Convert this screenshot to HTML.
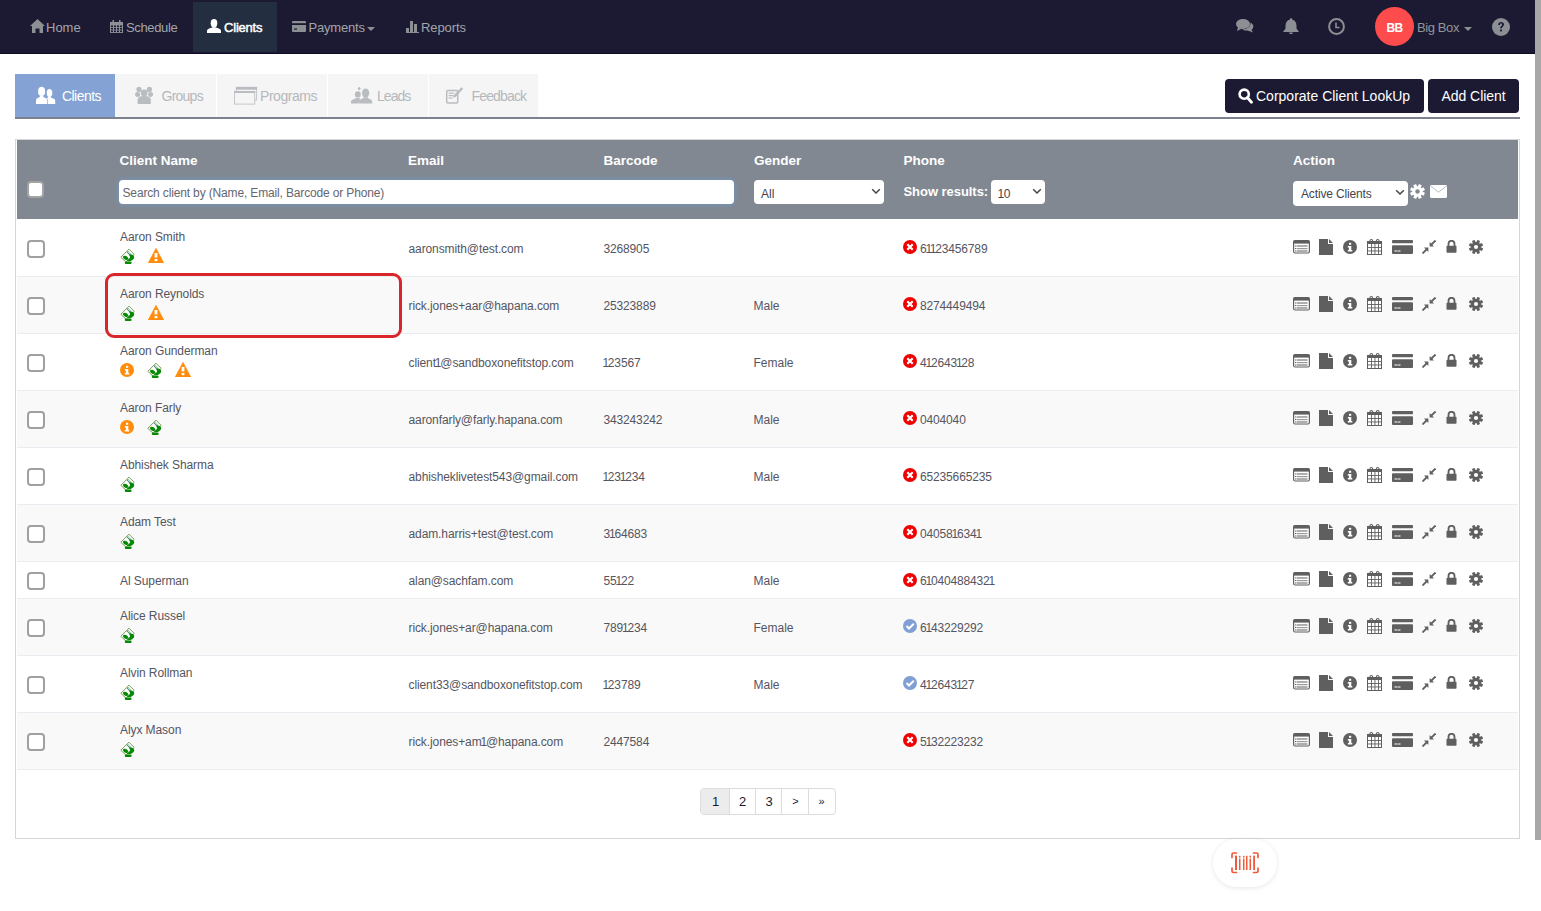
<!DOCTYPE html><html><head><meta charset="utf-8"><style>
html,body{margin:0;padding:0;}
body{width:1541px;height:911px;overflow:hidden;position:relative;background:#fff;font-family:"Liberation Sans",sans-serif;}
.t{position:absolute;white-space:nowrap;line-height:1;}
svg{display:block}
</style></head><body>
<div style="position:absolute;left:0px;top:0px;width:1541px;height:53px;background:#1b1a32"></div>
<div style="position:absolute;left:0px;top:53px;width:1541px;height:1px;background:#0d0c24"></div>
<div style="position:absolute;left:193px;top:2px;width:84px;height:50px;background:#232f40"></div>
<svg style="position:absolute;left:30px;top:19px" width="15" height="14" viewBox="0 0 15 14"><path d="M7.5 0 L15 7 L13 7 L13 14 L9.5 14 L9.5 9.5 L5.5 9.5 L5.5 14 L2 14 L2 7 L0 7 Z" fill="#8c8f94"/></svg>
<div class="t" style="left:46px;top:21.00px;font-size:13px;font-weight:400;color:#a3a5ab;">Home</div>
<svg style="position:absolute;left:110px;top:20px" width="13" height="13" viewBox="0 0 13 13"><rect x="0" y="2" width="13" height="11" fill="#8c8f94"/><rect x="1" y="5.5" width="2" height="1.6" fill="#1b1a32"/><rect x="1" y="8.0" width="2" height="1.6" fill="#1b1a32"/><rect x="1" y="10.5" width="2" height="1.6" fill="#1b1a32"/><rect x="4" y="5.5" width="2" height="1.6" fill="#1b1a32"/><rect x="4" y="8.0" width="2" height="1.6" fill="#1b1a32"/><rect x="4" y="10.5" width="2" height="1.6" fill="#1b1a32"/><rect x="7" y="5.5" width="2" height="1.6" fill="#1b1a32"/><rect x="7" y="8.0" width="2" height="1.6" fill="#1b1a32"/><rect x="7" y="10.5" width="2" height="1.6" fill="#1b1a32"/><rect x="10" y="5.5" width="2" height="1.6" fill="#1b1a32"/><rect x="10" y="8.0" width="2" height="1.6" fill="#1b1a32"/><rect x="10" y="10.5" width="2" height="1.6" fill="#1b1a32"/><rect x="2.5" y="0" width="1.5" height="3" fill="#8c8f94"/><rect x="9" y="0" width="1.5" height="3" fill="#8c8f94"/></svg>
<div class="t" style="left:126px;top:21.00px;font-size:13px;font-weight:400;color:#a3a5ab;letter-spacing:-0.35px">Schedule</div>
<svg style="position:absolute;left:207px;top:19px" width="14" height="14" viewBox="0 0 14 14"><ellipse cx="7" cy="4.2" rx="3.3" ry="4.2" fill="#fff"/><path d="M0 14 L0 11.8 C0 10.2 2 9.6 4.4 8.8 L5.4 8.2 L8.6 8.2 L9.6 8.8 C12 9.6 14 10.2 14 11.8 L14 14 Z" fill="#fff"/></svg>
<div class="t" style="left:224px;top:21.00px;font-size:13px;font-weight:400;color:#fff;letter-spacing:-0.2px;-webkit-text-stroke:0.45px #fff">Clients</div>
<svg style="position:absolute;left:292px;top:21px" width="14" height="11" viewBox="0 0 14 11"><rect x="0" y="0" width="14" height="11" rx="1" fill="#8c8f94"/><rect x="0" y="2.2" width="14" height="1.8" fill="#1b1a32"/><rect x="2" y="7.5" width="3" height="1.2" fill="#1b1a32"/></svg>
<div class="t" style="left:308.5px;top:21.00px;font-size:13px;font-weight:400;color:#a3a5ab;letter-spacing:-0.2px">Payments</div>
<svg style="position:absolute;left:367px;top:27px" width="8" height="4" viewBox="0 0 8 4"><path d="M0 0 L8 0 L4 4 Z" fill="#8c8f94"/></svg>
<svg style="position:absolute;left:406px;top:21px" width="13" height="12" viewBox="0 0 13 12"><rect x="0" y="7" width="3" height="5" fill="#8c8f94"/><rect x="4" y="0" width="3" height="12" fill="#8c8f94"/><rect x="8" y="3" width="3" height="9" fill="#8c8f94"/><rect x="0" y="11" width="13" height="1" fill="#8c8f94"/></svg>
<div class="t" style="left:421px;top:21.00px;font-size:13px;font-weight:400;color:#a3a5ab;letter-spacing:-0.1px">Reports</div>
<svg style="position:absolute;left:1236px;top:19px" width="18" height="14" viewBox="0 0 18 14"><ellipse cx="7" cy="5" rx="7" ry="5" fill="#8c8f94"/><path d="M2 8 L1 12 L6 9.5 Z" fill="#8c8f94"/><path d="M14.5 3.5 C17 5 18 7 17 9 C16.5 10 16 10.5 15.5 11 L17 13.5 L11.5 11.5 C10 11.8 7.5 11.5 6 10.5 C11 10.5 15 7.5 14.5 3.5 Z" fill="#8c8f94"/></svg>
<svg style="position:absolute;left:1283px;top:18px" width="16" height="16" viewBox="0 0 16 16"><path d="M8 0 C9 0 9 1 9 1.5 C12 2 13.5 4.5 13.5 8 L13.5 10.5 L16 14 L0 14 L2.5 10.5 L2.5 8 C2.5 4.5 4 2 7 1.5 C7 1 7 0 8 0 Z" fill="#8c8f94"/><path d="M6 14.5 L10 14.5 C10 15.5 9 16 8 16 C7 16 6 15.5 6 14.5 Z" fill="#8c8f94"/></svg>
<svg style="position:absolute;left:1328px;top:18px" width="17" height="17" viewBox="0 0 17 17"><circle cx="8.5" cy="8.5" r="7.4" fill="none" stroke="#8c8f94" stroke-width="2"/><path d="M8 4.5 L8 9.5 L11.5 9.5" fill="none" stroke="#8c8f94" stroke-width="1.6"/></svg>
<div style="position:absolute;left:1374.5px;top:6.5px;width:39.5px;height:39.5px;background:#fe4b4b;border-radius:50%"></div>
<div class="t" style="left:1386.5px;top:21.84px;font-size:12px;font-weight:700;color:#fff;letter-spacing:-0.6px">BB</div>
<div class="t" style="left:1417px;top:21.00px;font-size:13px;font-weight:400;color:#939599;letter-spacing:-0.4px">Big Box</div>
<svg style="position:absolute;left:1464px;top:27px" width="8" height="4" viewBox="0 0 8 4"><path d="M0 0 L8 0 L4 4 Z" fill="#8c8f94"/></svg>
<svg style="position:absolute;left:1492px;top:18px" width="18" height="18" viewBox="0 0 18 18"><circle cx="9" cy="9" r="9" fill="#8c8f94"/><path d="M6.2 7 C6.2 4.8 7.6 4 9.1 4 C10.8 4 12 5 12 6.6 C12 8.4 9.9 8.6 9.9 10.3 L8.2 10.3 C8.2 7.8 10.1 7.8 10.1 6.7 C10.1 6 9.7 5.6 9 5.6 C8.3 5.6 8 6.1 8 7 Z" fill="#1b1a32"/><rect x="8.1" y="11.5" width="1.9" height="1.9" fill="#1b1a32"/></svg>
<div style="position:absolute;left:15px;top:74px;width:100px;height:43px;background:#84a2d4"></div>
<div style="position:absolute;left:115px;top:74px;width:101px;height:43px;background:#f5f5f5"></div>
<div style="position:absolute;left:217px;top:74px;width:110px;height:43px;background:#f5f5f5"></div>
<div style="position:absolute;left:328px;top:74px;width:100px;height:43px;background:#f5f5f5"></div>
<div style="position:absolute;left:429px;top:74px;width:109px;height:43px;background:#f5f5f5"></div>
<div style="position:absolute;left:15px;top:117px;width:1505px;height:2px;background:#7b828d"></div>
<svg style="position:absolute;left:36px;top:86px" width="20" height="18" viewBox="0 0 20 18"><ellipse cx="5.6" cy="5.4" rx="3.5" ry="4.6" fill="#fff"/><path d="M0 18 L0 14.2 C0 12.6 1.4 12 3.4 11.2 L4.2 10 L7 10 L7.8 11.2 C9.8 12 11.2 12.6 11.2 14.2 L11.2 18 Z" fill="#fff"/><ellipse cx="13.5" cy="7" rx="2.8" ry="4" fill="#fff"/><path d="M11.8 18 L11.8 13.6 L10.6 12.6 L11.8 11.6 L12.4 10.8 L14.6 10.8 L15.2 11.8 C17 12.4 19.2 12.8 19.2 14.4 L19.2 18 Z" fill="#fff"/></svg>
<div class="t" style="left:62px;top:89.15px;font-size:14px;font-weight:400;color:#fff;letter-spacing:-0.55px">Clients</div>
<svg style="position:absolute;left:135px;top:86px" width="18" height="18" viewBox="0 0 18 18"><circle cx="4" cy="3.4" r="2.6" fill="#b9bcc0"/><circle cx="14.4" cy="3.4" r="2.6" fill="#b9bcc0"/><circle cx="2.6" cy="8.4" r="2.5" fill="#b9bcc0"/><circle cx="15.6" cy="8.4" r="2.5" fill="#b9bcc0"/><circle cx="9.2" cy="6.9" r="3.4" fill="#b9bcc0"/><path d="M2.6 18 L2.6 14 C2.6 11.4 5 10 9.2 10 C13.4 10 15.8 11.4 15.8 14 L15.8 18 Z" fill="#b9bcc0"/></svg>
<div class="t" style="left:161.5px;top:89.15px;font-size:14px;font-weight:400;color:#b5b8bc;letter-spacing:-0.75px">Groups</div>
<svg style="position:absolute;left:233px;top:86px" width="25" height="19" viewBox="0 0 25 19"><rect x="3.4" y="1.4" width="20.2" height="12.6" fill="none" stroke="#c3c6ca" stroke-width="1"/><rect x="2.9" y="0.9" width="21.2" height="2.8" fill="#b9bcc0"/><rect x="1.5" y="5.5" width="20.2" height="12.6" fill="#f5f5f5" stroke="#c3c6ca" stroke-width="1"/><rect x="1" y="5" width="21.2" height="2" fill="#b9bcc0"/></svg>
<div class="t" style="left:260px;top:89.15px;font-size:14px;font-weight:400;color:#b5b8bc;letter-spacing:-0.45px">Programs</div>
<svg style="position:absolute;left:351px;top:86px" width="22" height="18" viewBox="0 0 22 18"><path d="M8.2 0.8 L9.9 2.6 L8.2 4.4 L6.5 2.6 Z" fill="#b9bcc0"/><ellipse cx="6.8" cy="8.4" rx="2.9" ry="3.2" fill="#b9bcc0"/><path d="M0 17.5 L0 15.8 C0 14.4 1.6 13.6 3.6 13 L5 12 L8.4 12 L9 13 L7.4 17.5 Z" fill="#b9bcc0"/><ellipse cx="14.6" cy="7" rx="3.6" ry="4.6" fill="#b9bcc0"/><path d="M7.8 17.5 L7.8 15.6 C7.8 14 9.6 13.2 11.8 12.4 L12.6 11.2 L16.6 11.2 L17.4 12.4 C19.6 13.2 21.2 14 21.2 15.6 L21.2 17.5 Z" fill="#b9bcc0"/></svg>
<div class="t" style="left:377px;top:89.15px;font-size:14px;font-weight:400;color:#b5b8bc;letter-spacing:-0.95px">Leads</div>
<svg style="position:absolute;left:445px;top:86px" width="19" height="18" viewBox="0 0 19 18"><rect x="1.7" y="4.5" width="11" height="12.6" rx="1" fill="none" stroke="#b9bcc0" stroke-width="1.5"/><rect x="3.6" y="6.6" width="5.6" height="1.2" fill="#b9bcc0"/><rect x="3.6" y="9" width="4.6" height="1.2" fill="#b9bcc0"/><rect x="3.6" y="11.4" width="3.6" height="1.2" fill="#b9bcc0"/><path d="M16.4 1.2 L18.2 2.8 L10.6 11 L7.8 11.8 L8.8 9.2 Z" fill="#b9bcc0"/></svg>
<div class="t" style="left:471.5px;top:89.15px;font-size:14px;font-weight:400;color:#b5b8bc;letter-spacing:-0.85px">Feedback</div>
<div style="position:absolute;left:1225px;top:79px;width:199px;height:34px;background:#1b1a32;border-radius:4px"></div>
<div style="position:absolute;left:1428px;top:79px;width:91px;height:34px;background:#1b1a32;border-radius:4px"></div>
<svg style="position:absolute;left:1238px;top:88px" width="15" height="16" viewBox="0 0 15 16"><circle cx="6.2" cy="6.2" r="4.6" fill="none" stroke="#fff" stroke-width="2.6"/><path d="M9.3 9.5 L13.5 14.2" stroke="#fff" stroke-width="2.8" stroke-linecap="round"/></svg>
<div class="t" style="left:1256px;top:89.15px;font-size:14px;font-weight:400;color:#fff;letter-spacing:0px">Corporate Client LookUp</div>
<div class="t" style="left:1441.5px;top:89.15px;font-size:14px;font-weight:400;color:#fff;letter-spacing:-0.05px">Add Client</div>
<div style="position:absolute;left:15px;top:139px;width:1503px;height:698px;border:1px solid #d6d6da;background:#fff"></div>
<div style="position:absolute;left:17px;top:140px;width:1501px;height:79px;background:#818892"></div>
<div style="position:absolute;left:27px;top:181px;width:13px;height:13px;background:#fff;border:2px solid #a3a3a3;border-radius:4px"></div>
<div class="t" style="left:119.5px;top:153.57px;font-size:13.5px;font-weight:700;color:#fff;letter-spacing:0px">Client Name</div>
<div class="t" style="left:408px;top:153.57px;font-size:13.5px;font-weight:700;color:#fff;letter-spacing:0px">Email</div>
<div class="t" style="left:603.5px;top:153.57px;font-size:13.5px;font-weight:700;color:#fff;letter-spacing:0px">Barcode</div>
<div class="t" style="left:754px;top:153.57px;font-size:13.5px;font-weight:700;color:#fff;letter-spacing:0px">Gender</div>
<div class="t" style="left:903.5px;top:153.57px;font-size:13.5px;font-weight:700;color:#fff;letter-spacing:0px">Phone</div>
<div class="t" style="left:1293px;top:153.57px;font-size:13.5px;font-weight:700;color:#fff;letter-spacing:0px">Action</div>
<div style="position:absolute;left:119px;top:180px;width:615px;height:24px;background:#fff;border-radius:4px;box-shadow:0 0 5px 1px rgba(110,160,215,0.55)"></div>
<div class="t" style="left:122.5px;top:186.84px;font-size:12px;font-weight:400;color:#66666e;letter-spacing:-0.15px">Search client by (Name, Email, Barcode or Phone)</div>
<div style="position:absolute;left:754px;top:180px;width:130px;height:24px;background:#fff;border-radius:4px"></div>
<div class="t" style="left:761px;top:187.84px;font-size:12px;font-weight:400;color:#44444c;">All</div>
<svg style="position:absolute;left:871px;top:188px" width="10" height="7" viewBox="0 0 10 7"><path d="M1.2 1.2 L5 5 L8.8 1.2" fill="none" stroke="#444" stroke-width="1.5"/></svg>
<div class="t" style="left:903.5px;top:185.00px;font-size:13px;font-weight:700;color:#fff;letter-spacing:-0.05px">Show results:</div>
<div style="position:absolute;left:991px;top:180px;width:54px;height:24px;background:#fff;border-radius:4px"></div>
<div class="t" style="left:997.5px;top:187.84px;font-size:12px;font-weight:400;color:#44444c;letter-spacing:-0.5px">10</div>
<svg style="position:absolute;left:1032px;top:188px" width="10" height="7" viewBox="0 0 10 7"><path d="M1.2 1.2 L5 5 L8.8 1.2" fill="none" stroke="#444" stroke-width="1.5"/></svg>
<div style="position:absolute;left:1293px;top:181px;width:115px;height:25px;background:#fff;border-radius:4px"></div>
<div class="t" style="left:1301px;top:187.84px;font-size:12px;font-weight:400;color:#44444c;letter-spacing:-0.15px">Active Clients</div>
<svg style="position:absolute;left:1395px;top:189px" width="10" height="7" viewBox="0 0 10 7"><path d="M1.2 1.2 L5 5 L8.8 1.2" fill="none" stroke="#444" stroke-width="1.5"/></svg>
<svg style="position:absolute;left:1410px;top:184px" width="15" height="15" viewBox="0 0 15 15"><circle cx="7.5" cy="7.5" r="5.2" fill="#fff"/><rect x="5.9" y="0.09999999999999964" width="3.2" height="3.2" rx="0.6" fill="#fff" transform="rotate(22.5 7.5 7.5)"/><rect x="5.9" y="0.09999999999999964" width="3.2" height="3.2" rx="0.6" fill="#fff" transform="rotate(67.5 7.5 7.5)"/><rect x="5.9" y="0.09999999999999964" width="3.2" height="3.2" rx="0.6" fill="#fff" transform="rotate(112.5 7.5 7.5)"/><rect x="5.9" y="0.09999999999999964" width="3.2" height="3.2" rx="0.6" fill="#fff" transform="rotate(157.5 7.5 7.5)"/><rect x="5.9" y="0.09999999999999964" width="3.2" height="3.2" rx="0.6" fill="#fff" transform="rotate(202.5 7.5 7.5)"/><rect x="5.9" y="0.09999999999999964" width="3.2" height="3.2" rx="0.6" fill="#fff" transform="rotate(247.5 7.5 7.5)"/><rect x="5.9" y="0.09999999999999964" width="3.2" height="3.2" rx="0.6" fill="#fff" transform="rotate(292.5 7.5 7.5)"/><rect x="5.9" y="0.09999999999999964" width="3.2" height="3.2" rx="0.6" fill="#fff" transform="rotate(337.5 7.5 7.5)"/><circle cx="7.5" cy="7.5" r="2.2" fill="#818892"/></svg>
<svg style="position:absolute;left:1430px;top:185px" width="17" height="13" viewBox="0 0 17 13"><rect x="0" y="0" width="17" height="13" rx="1.5" fill="#fff"/><path d="M0.8 1.2 L8.5 7.2 L16.2 1.2" fill="none" stroke="#b0b5bc" stroke-width="0.9"/></svg>
<div style="position:absolute;left:17px;top:219px;width:1501px;height:57px;background:#fff"></div>
<div style="position:absolute;left:17px;top:276px;width:1501px;height:1px;background:#ebebf2"></div>
<div style="position:absolute;left:27px;top:240px;width:14px;height:14px;background:#fff;border:2px solid #a0a0a0;border-radius:4px"></div>
<div class="t" style="left:120px;top:230.84px;font-size:12px;font-weight:400;color:#55555f;letter-spacing:-0.08px">Aaron Smith</div>
<svg style="position:absolute;left:120px;top:248px" width="15" height="17" viewBox="0 0 15 17"><path d="M0.8 9.3 L9 1.2 L14.2 6.4 L6.1 14.2 Z" fill="#fff" stroke="#6a9440" stroke-width="0.9" stroke-linejoin="round"/><path d="M7.3 3.8 L11.9 8.4" stroke="#3f9070" stroke-width="2" stroke-dasharray="1.1 0.5"/><path d="M2.8 8.8 C3.8 7.4 6.2 7.6 7.4 9 L8.6 10.2 L7.2 12.2 C5.4 12.2 3.2 11 2.8 8.8 Z" fill="#058a05"/><path d="M9 6.8 C11 6.2 13.8 7 14.2 9 C14.4 10.6 12.8 12.4 10.6 13 L8.4 13.2 L6.8 12.6 L9.6 10.4 C10.4 9.4 10 8 9 6.8 Z" fill="#058a05"/><rect x="4.8" y="13.6" width="6.8" height="2.4" rx="1.1" fill="#058a05"/></svg>
<svg style="position:absolute;left:147.5px;top:248px" width="16" height="15" viewBox="0 0 16 15"><path d="M8 0.3 L15.8 15 L0.2 15 Z" fill="#ff8c0a" stroke="#ff8c0a" stroke-width="0.6" stroke-linejoin="round"/><rect x="6.6" y="5" width="2.8" height="4.5" fill="#fff"/><rect x="6.6" y="11" width="2.8" height="2.2" fill="#fff"/></svg>
<div class="t" style="left:408.5px;top:242.84px;font-size:12px;font-weight:400;color:#55555f;letter-spacing:-0.1px">aaronsmith@test.com</div>
<div class="t" style="left:603.5px;top:242.84px;font-size:12px;font-weight:400;color:#55555f;letter-spacing:-0.15px">3268905</div>
<svg style="position:absolute;left:903px;top:240.0px" width="14" height="14" viewBox="0 0 14 14"><circle cx="7" cy="7" r="7" fill="#f00000"/><path d="M4.3 4.3 L9.7 9.7 M9.7 4.3 L4.3 9.7" stroke="#fff" stroke-width="2.2"/></svg>
<div class="t" style="left:920px;top:242.84px;font-size:12px;font-weight:400;color:#55555f;letter-spacing:-0.15px">6<span style="margin:0 -1.1px">1</span><span style="margin:0 -1.1px">1</span>23456789</div>
<svg style="position:absolute;left:1293px;top:239.5px" width="17" height="14" viewBox="0 0 17 14"><rect x="0.6" y="0.6" width="15.8" height="12.4" rx="1.5" fill="#fff" stroke="#5f5f5f" stroke-width="1.2"/><rect x="0.6" y="0.6" width="15.8" height="3" fill="#5f5f5f"/><rect x="3.5" y="5.5" width="11" height="1" fill="#5f5f5f"/><rect x="3.5" y="8" width="11" height="1.2" fill="#999"/><rect x="3.5" y="10.5" width="11" height="1" fill="#5f5f5f"/><rect x="2" y="5.5" width="1" height="1" fill="#5f5f5f"/><rect x="2" y="8" width="1" height="1" fill="#5f5f5f"/><rect x="2" y="10.5" width="1" height="1" fill="#5f5f5f"/></svg>
<svg style="position:absolute;left:1319px;top:238.5px" width="14" height="16" viewBox="0 0 14 16"><path d="M0 0 L9 0 L9 5 L14 5 L14 16 L0 16 Z" fill="#5f5f5f"/><path d="M10 0 L14 4 L10 4 Z" fill="#5f5f5f"/></svg>
<svg style="position:absolute;left:1343px;top:239.5px" width="14" height="14" viewBox="0 0 14 14"><circle cx="7" cy="7" r="7" fill="#5f5f5f"/><rect x="6" y="2.8" width="2.2" height="2" fill="#fff"/><path d="M4.8 6 L8.3 6 L8.3 10 L9.3 10 L9.3 11.5 L4.8 11.5 L4.8 10 L5.9 10 L5.9 7.4 L4.8 7.4 Z" fill="#fff"/></svg>
<svg style="position:absolute;left:1367px;top:238.5px" width="15" height="16" viewBox="0 0 15 16"><rect x="0.5" y="2.5" width="14" height="13" fill="#fff" stroke="#5f5f5f" stroke-width="1"/><rect x="0.5" y="2.5" width="14" height="2.5" fill="#5f5f5f"/><rect x="4" y="5" width="0.9" height="10.5" fill="#5f5f5f"/><rect x="7.5" y="5" width="0.9" height="10.5" fill="#5f5f5f"/><rect x="11" y="5" width="0.9" height="10.5" fill="#5f5f5f"/><rect x="0.5" y="8" width="14" height="0.9" fill="#5f5f5f"/><rect x="0.5" y="11.5" width="14" height="0.9" fill="#5f5f5f"/><path d="M3 3.5 L3 1.6 C3 0.2 5.6 0.2 5.6 1.6 L5.6 3.5" fill="none" stroke="#5f5f5f" stroke-width="1.1"/><path d="M9.4 3.5 L9.4 1.6 C9.4 0.2 12 0.2 12 1.6 L12 3.5" fill="none" stroke="#5f5f5f" stroke-width="1.1"/></svg>
<svg style="position:absolute;left:1392px;top:239.5px" width="21" height="14" viewBox="0 0 21 14"><rect x="0" y="0" width="21" height="3.2" rx="1" fill="#5f5f5f"/><rect x="0" y="5.3" width="21" height="8.7" rx="1" fill="#5f5f5f"/><rect x="2.5" y="10.5" width="2.5" height="1" fill="#fff"/><rect x="5.5" y="10.5" width="3" height="1" fill="#fff"/></svg>
<svg style="position:absolute;left:1422px;top:239.5px" width="14" height="14" viewBox="0 0 14 14"><path d="M13.5 0.5 L9.5 4.5" stroke="#5f5f5f" stroke-width="1.8"/><path d="M7.6 2 L7.6 6.4 L12 6.4 Z" fill="#5f5f5f"/><path d="M0.5 13.5 L4.5 9.5" stroke="#5f5f5f" stroke-width="1.8"/><path d="M2 7.6 L6.4 7.6 L6.4 12 Z" fill="#5f5f5f"/></svg>
<svg style="position:absolute;left:1446px;top:239.5px" width="11" height="13" viewBox="0 0 11 13"><path d="M2.5 6 L2.5 4 C2.5 1.5 4 0.8 5.5 0.8 C7 0.8 8.5 1.5 8.5 4 L8.5 6" fill="none" stroke="#5f5f5f" stroke-width="1.8"/><rect x="0.5" y="5.8" width="10" height="7" rx="0.8" fill="#5f5f5f"/></svg>
<svg style="position:absolute;left:1469px;top:239.5px" width="14" height="14" viewBox="0 0 14 14"><circle cx="7" cy="7" r="5.0" fill="#5f5f5f"/><rect x="5.5" y="-0.09999999999999964" width="3.0" height="3.0999999999999996" rx="0.6" fill="#5f5f5f" transform="rotate(22.5 7 7)"/><rect x="5.5" y="-0.09999999999999964" width="3.0" height="3.0999999999999996" rx="0.6" fill="#5f5f5f" transform="rotate(67.5 7 7)"/><rect x="5.5" y="-0.09999999999999964" width="3.0" height="3.0999999999999996" rx="0.6" fill="#5f5f5f" transform="rotate(112.5 7 7)"/><rect x="5.5" y="-0.09999999999999964" width="3.0" height="3.0999999999999996" rx="0.6" fill="#5f5f5f" transform="rotate(157.5 7 7)"/><rect x="5.5" y="-0.09999999999999964" width="3.0" height="3.0999999999999996" rx="0.6" fill="#5f5f5f" transform="rotate(202.5 7 7)"/><rect x="5.5" y="-0.09999999999999964" width="3.0" height="3.0999999999999996" rx="0.6" fill="#5f5f5f" transform="rotate(247.5 7 7)"/><rect x="5.5" y="-0.09999999999999964" width="3.0" height="3.0999999999999996" rx="0.6" fill="#5f5f5f" transform="rotate(292.5 7 7)"/><rect x="5.5" y="-0.09999999999999964" width="3.0" height="3.0999999999999996" rx="0.6" fill="#5f5f5f" transform="rotate(337.5 7 7)"/><circle cx="7" cy="7" r="2.1" fill="#fff"/></svg>
<div style="position:absolute;left:17px;top:277px;width:1501px;height:56px;background:#f9f9f9"></div>
<div style="position:absolute;left:17px;top:333px;width:1501px;height:1px;background:#ebebf2"></div>
<div style="position:absolute;left:27px;top:297px;width:14px;height:14px;background:#fff;border:2px solid #a0a0a0;border-radius:4px"></div>
<div class="t" style="left:120px;top:287.84px;font-size:12px;font-weight:400;color:#55555f;letter-spacing:-0.08px">Aaron Reynolds</div>
<svg style="position:absolute;left:120px;top:305px" width="15" height="17" viewBox="0 0 15 17"><path d="M0.8 9.3 L9 1.2 L14.2 6.4 L6.1 14.2 Z" fill="#fff" stroke="#6a9440" stroke-width="0.9" stroke-linejoin="round"/><path d="M7.3 3.8 L11.9 8.4" stroke="#3f9070" stroke-width="2" stroke-dasharray="1.1 0.5"/><path d="M2.8 8.8 C3.8 7.4 6.2 7.6 7.4 9 L8.6 10.2 L7.2 12.2 C5.4 12.2 3.2 11 2.8 8.8 Z" fill="#058a05"/><path d="M9 6.8 C11 6.2 13.8 7 14.2 9 C14.4 10.6 12.8 12.4 10.6 13 L8.4 13.2 L6.8 12.6 L9.6 10.4 C10.4 9.4 10 8 9 6.8 Z" fill="#058a05"/><rect x="4.8" y="13.6" width="6.8" height="2.4" rx="1.1" fill="#058a05"/></svg>
<svg style="position:absolute;left:147.5px;top:305px" width="16" height="15" viewBox="0 0 16 15"><path d="M8 0.3 L15.8 15 L0.2 15 Z" fill="#ff8c0a" stroke="#ff8c0a" stroke-width="0.6" stroke-linejoin="round"/><rect x="6.6" y="5" width="2.8" height="4.5" fill="#fff"/><rect x="6.6" y="11" width="2.8" height="2.2" fill="#fff"/></svg>
<div class="t" style="left:408.5px;top:299.84px;font-size:12px;font-weight:400;color:#55555f;letter-spacing:-0.1px">rick.jones+aar@hapana.com</div>
<div class="t" style="left:603.5px;top:299.84px;font-size:12px;font-weight:400;color:#55555f;letter-spacing:-0.15px">25323889</div>
<div class="t" style="left:753.5px;top:299.84px;font-size:12px;font-weight:400;color:#55555f;">Male</div>
<svg style="position:absolute;left:903px;top:297.0px" width="14" height="14" viewBox="0 0 14 14"><circle cx="7" cy="7" r="7" fill="#f00000"/><path d="M4.3 4.3 L9.7 9.7 M9.7 4.3 L4.3 9.7" stroke="#fff" stroke-width="2.2"/></svg>
<div class="t" style="left:920px;top:299.84px;font-size:12px;font-weight:400;color:#55555f;letter-spacing:-0.15px">8274449494</div>
<svg style="position:absolute;left:1293px;top:296.5px" width="17" height="14" viewBox="0 0 17 14"><rect x="0.6" y="0.6" width="15.8" height="12.4" rx="1.5" fill="#fff" stroke="#5f5f5f" stroke-width="1.2"/><rect x="0.6" y="0.6" width="15.8" height="3" fill="#5f5f5f"/><rect x="3.5" y="5.5" width="11" height="1" fill="#5f5f5f"/><rect x="3.5" y="8" width="11" height="1.2" fill="#999"/><rect x="3.5" y="10.5" width="11" height="1" fill="#5f5f5f"/><rect x="2" y="5.5" width="1" height="1" fill="#5f5f5f"/><rect x="2" y="8" width="1" height="1" fill="#5f5f5f"/><rect x="2" y="10.5" width="1" height="1" fill="#5f5f5f"/></svg>
<svg style="position:absolute;left:1319px;top:295.5px" width="14" height="16" viewBox="0 0 14 16"><path d="M0 0 L9 0 L9 5 L14 5 L14 16 L0 16 Z" fill="#5f5f5f"/><path d="M10 0 L14 4 L10 4 Z" fill="#5f5f5f"/></svg>
<svg style="position:absolute;left:1343px;top:296.5px" width="14" height="14" viewBox="0 0 14 14"><circle cx="7" cy="7" r="7" fill="#5f5f5f"/><rect x="6" y="2.8" width="2.2" height="2" fill="#fff"/><path d="M4.8 6 L8.3 6 L8.3 10 L9.3 10 L9.3 11.5 L4.8 11.5 L4.8 10 L5.9 10 L5.9 7.4 L4.8 7.4 Z" fill="#fff"/></svg>
<svg style="position:absolute;left:1367px;top:295.5px" width="15" height="16" viewBox="0 0 15 16"><rect x="0.5" y="2.5" width="14" height="13" fill="#fff" stroke="#5f5f5f" stroke-width="1"/><rect x="0.5" y="2.5" width="14" height="2.5" fill="#5f5f5f"/><rect x="4" y="5" width="0.9" height="10.5" fill="#5f5f5f"/><rect x="7.5" y="5" width="0.9" height="10.5" fill="#5f5f5f"/><rect x="11" y="5" width="0.9" height="10.5" fill="#5f5f5f"/><rect x="0.5" y="8" width="14" height="0.9" fill="#5f5f5f"/><rect x="0.5" y="11.5" width="14" height="0.9" fill="#5f5f5f"/><path d="M3 3.5 L3 1.6 C3 0.2 5.6 0.2 5.6 1.6 L5.6 3.5" fill="none" stroke="#5f5f5f" stroke-width="1.1"/><path d="M9.4 3.5 L9.4 1.6 C9.4 0.2 12 0.2 12 1.6 L12 3.5" fill="none" stroke="#5f5f5f" stroke-width="1.1"/></svg>
<svg style="position:absolute;left:1392px;top:296.5px" width="21" height="14" viewBox="0 0 21 14"><rect x="0" y="0" width="21" height="3.2" rx="1" fill="#5f5f5f"/><rect x="0" y="5.3" width="21" height="8.7" rx="1" fill="#5f5f5f"/><rect x="2.5" y="10.5" width="2.5" height="1" fill="#fff"/><rect x="5.5" y="10.5" width="3" height="1" fill="#fff"/></svg>
<svg style="position:absolute;left:1422px;top:296.5px" width="14" height="14" viewBox="0 0 14 14"><path d="M13.5 0.5 L9.5 4.5" stroke="#5f5f5f" stroke-width="1.8"/><path d="M7.6 2 L7.6 6.4 L12 6.4 Z" fill="#5f5f5f"/><path d="M0.5 13.5 L4.5 9.5" stroke="#5f5f5f" stroke-width="1.8"/><path d="M2 7.6 L6.4 7.6 L6.4 12 Z" fill="#5f5f5f"/></svg>
<svg style="position:absolute;left:1446px;top:296.5px" width="11" height="13" viewBox="0 0 11 13"><path d="M2.5 6 L2.5 4 C2.5 1.5 4 0.8 5.5 0.8 C7 0.8 8.5 1.5 8.5 4 L8.5 6" fill="none" stroke="#5f5f5f" stroke-width="1.8"/><rect x="0.5" y="5.8" width="10" height="7" rx="0.8" fill="#5f5f5f"/></svg>
<svg style="position:absolute;left:1469px;top:296.5px" width="14" height="14" viewBox="0 0 14 14"><circle cx="7" cy="7" r="5.0" fill="#5f5f5f"/><rect x="5.5" y="-0.09999999999999964" width="3.0" height="3.0999999999999996" rx="0.6" fill="#5f5f5f" transform="rotate(22.5 7 7)"/><rect x="5.5" y="-0.09999999999999964" width="3.0" height="3.0999999999999996" rx="0.6" fill="#5f5f5f" transform="rotate(67.5 7 7)"/><rect x="5.5" y="-0.09999999999999964" width="3.0" height="3.0999999999999996" rx="0.6" fill="#5f5f5f" transform="rotate(112.5 7 7)"/><rect x="5.5" y="-0.09999999999999964" width="3.0" height="3.0999999999999996" rx="0.6" fill="#5f5f5f" transform="rotate(157.5 7 7)"/><rect x="5.5" y="-0.09999999999999964" width="3.0" height="3.0999999999999996" rx="0.6" fill="#5f5f5f" transform="rotate(202.5 7 7)"/><rect x="5.5" y="-0.09999999999999964" width="3.0" height="3.0999999999999996" rx="0.6" fill="#5f5f5f" transform="rotate(247.5 7 7)"/><rect x="5.5" y="-0.09999999999999964" width="3.0" height="3.0999999999999996" rx="0.6" fill="#5f5f5f" transform="rotate(292.5 7 7)"/><rect x="5.5" y="-0.09999999999999964" width="3.0" height="3.0999999999999996" rx="0.6" fill="#5f5f5f" transform="rotate(337.5 7 7)"/><circle cx="7" cy="7" r="2.1" fill="#fff"/></svg>
<div style="position:absolute;left:17px;top:334px;width:1501px;height:56px;background:#fff"></div>
<div style="position:absolute;left:17px;top:390px;width:1501px;height:1px;background:#ebebf2"></div>
<div style="position:absolute;left:27px;top:354px;width:14px;height:14px;background:#fff;border:2px solid #a0a0a0;border-radius:4px"></div>
<div class="t" style="left:120px;top:344.84px;font-size:12px;font-weight:400;color:#55555f;letter-spacing:-0.08px">Aaron Gunderman</div>
<svg style="position:absolute;left:119.5px;top:363px" width="14" height="14" viewBox="0 0 14 14"><circle cx="7" cy="7" r="7" fill="#ff8c0a"/><rect x="6" y="2.8" width="2.2" height="2" fill="#fff"/><path d="M4.8 6 L8.3 6 L8.3 10 L9.3 10 L9.3 11.5 L4.8 11.5 L4.8 10 L5.9 10 L5.9 7.4 L4.8 7.4 Z" fill="#fff"/></svg>
<svg style="position:absolute;left:147px;top:362px" width="15" height="17" viewBox="0 0 15 17"><path d="M0.8 9.3 L9 1.2 L14.2 6.4 L6.1 14.2 Z" fill="#fff" stroke="#6a9440" stroke-width="0.9" stroke-linejoin="round"/><path d="M7.3 3.8 L11.9 8.4" stroke="#3f9070" stroke-width="2" stroke-dasharray="1.1 0.5"/><path d="M2.8 8.8 C3.8 7.4 6.2 7.6 7.4 9 L8.6 10.2 L7.2 12.2 C5.4 12.2 3.2 11 2.8 8.8 Z" fill="#058a05"/><path d="M9 6.8 C11 6.2 13.8 7 14.2 9 C14.4 10.6 12.8 12.4 10.6 13 L8.4 13.2 L6.8 12.6 L9.6 10.4 C10.4 9.4 10 8 9 6.8 Z" fill="#058a05"/><rect x="4.8" y="13.6" width="6.8" height="2.4" rx="1.1" fill="#058a05"/></svg>
<svg style="position:absolute;left:174.5px;top:362px" width="16" height="15" viewBox="0 0 16 15"><path d="M8 0.3 L15.8 15 L0.2 15 Z" fill="#ff8c0a" stroke="#ff8c0a" stroke-width="0.6" stroke-linejoin="round"/><rect x="6.6" y="5" width="2.8" height="4.5" fill="#fff"/><rect x="6.6" y="11" width="2.8" height="2.2" fill="#fff"/></svg>
<div class="t" style="left:408.5px;top:356.84px;font-size:12px;font-weight:400;color:#55555f;letter-spacing:-0.1px">client<span style="margin:0 -1.1px">1</span>@sandboxonefitstop.com</div>
<div class="t" style="left:603.5px;top:356.84px;font-size:12px;font-weight:400;color:#55555f;letter-spacing:-0.15px"><span style="margin:0 -1.1px">1</span>23567</div>
<div class="t" style="left:753.5px;top:356.84px;font-size:12px;font-weight:400;color:#55555f;">Female</div>
<svg style="position:absolute;left:903px;top:354.0px" width="14" height="14" viewBox="0 0 14 14"><circle cx="7" cy="7" r="7" fill="#f00000"/><path d="M4.3 4.3 L9.7 9.7 M9.7 4.3 L4.3 9.7" stroke="#fff" stroke-width="2.2"/></svg>
<div class="t" style="left:920px;top:356.84px;font-size:12px;font-weight:400;color:#55555f;letter-spacing:-0.15px">4<span style="margin:0 -1.1px">1</span>2643<span style="margin:0 -1.1px">1</span>28</div>
<svg style="position:absolute;left:1293px;top:353.5px" width="17" height="14" viewBox="0 0 17 14"><rect x="0.6" y="0.6" width="15.8" height="12.4" rx="1.5" fill="#fff" stroke="#5f5f5f" stroke-width="1.2"/><rect x="0.6" y="0.6" width="15.8" height="3" fill="#5f5f5f"/><rect x="3.5" y="5.5" width="11" height="1" fill="#5f5f5f"/><rect x="3.5" y="8" width="11" height="1.2" fill="#999"/><rect x="3.5" y="10.5" width="11" height="1" fill="#5f5f5f"/><rect x="2" y="5.5" width="1" height="1" fill="#5f5f5f"/><rect x="2" y="8" width="1" height="1" fill="#5f5f5f"/><rect x="2" y="10.5" width="1" height="1" fill="#5f5f5f"/></svg>
<svg style="position:absolute;left:1319px;top:352.5px" width="14" height="16" viewBox="0 0 14 16"><path d="M0 0 L9 0 L9 5 L14 5 L14 16 L0 16 Z" fill="#5f5f5f"/><path d="M10 0 L14 4 L10 4 Z" fill="#5f5f5f"/></svg>
<svg style="position:absolute;left:1343px;top:353.5px" width="14" height="14" viewBox="0 0 14 14"><circle cx="7" cy="7" r="7" fill="#5f5f5f"/><rect x="6" y="2.8" width="2.2" height="2" fill="#fff"/><path d="M4.8 6 L8.3 6 L8.3 10 L9.3 10 L9.3 11.5 L4.8 11.5 L4.8 10 L5.9 10 L5.9 7.4 L4.8 7.4 Z" fill="#fff"/></svg>
<svg style="position:absolute;left:1367px;top:352.5px" width="15" height="16" viewBox="0 0 15 16"><rect x="0.5" y="2.5" width="14" height="13" fill="#fff" stroke="#5f5f5f" stroke-width="1"/><rect x="0.5" y="2.5" width="14" height="2.5" fill="#5f5f5f"/><rect x="4" y="5" width="0.9" height="10.5" fill="#5f5f5f"/><rect x="7.5" y="5" width="0.9" height="10.5" fill="#5f5f5f"/><rect x="11" y="5" width="0.9" height="10.5" fill="#5f5f5f"/><rect x="0.5" y="8" width="14" height="0.9" fill="#5f5f5f"/><rect x="0.5" y="11.5" width="14" height="0.9" fill="#5f5f5f"/><path d="M3 3.5 L3 1.6 C3 0.2 5.6 0.2 5.6 1.6 L5.6 3.5" fill="none" stroke="#5f5f5f" stroke-width="1.1"/><path d="M9.4 3.5 L9.4 1.6 C9.4 0.2 12 0.2 12 1.6 L12 3.5" fill="none" stroke="#5f5f5f" stroke-width="1.1"/></svg>
<svg style="position:absolute;left:1392px;top:353.5px" width="21" height="14" viewBox="0 0 21 14"><rect x="0" y="0" width="21" height="3.2" rx="1" fill="#5f5f5f"/><rect x="0" y="5.3" width="21" height="8.7" rx="1" fill="#5f5f5f"/><rect x="2.5" y="10.5" width="2.5" height="1" fill="#fff"/><rect x="5.5" y="10.5" width="3" height="1" fill="#fff"/></svg>
<svg style="position:absolute;left:1422px;top:353.5px" width="14" height="14" viewBox="0 0 14 14"><path d="M13.5 0.5 L9.5 4.5" stroke="#5f5f5f" stroke-width="1.8"/><path d="M7.6 2 L7.6 6.4 L12 6.4 Z" fill="#5f5f5f"/><path d="M0.5 13.5 L4.5 9.5" stroke="#5f5f5f" stroke-width="1.8"/><path d="M2 7.6 L6.4 7.6 L6.4 12 Z" fill="#5f5f5f"/></svg>
<svg style="position:absolute;left:1446px;top:353.5px" width="11" height="13" viewBox="0 0 11 13"><path d="M2.5 6 L2.5 4 C2.5 1.5 4 0.8 5.5 0.8 C7 0.8 8.5 1.5 8.5 4 L8.5 6" fill="none" stroke="#5f5f5f" stroke-width="1.8"/><rect x="0.5" y="5.8" width="10" height="7" rx="0.8" fill="#5f5f5f"/></svg>
<svg style="position:absolute;left:1469px;top:353.5px" width="14" height="14" viewBox="0 0 14 14"><circle cx="7" cy="7" r="5.0" fill="#5f5f5f"/><rect x="5.5" y="-0.09999999999999964" width="3.0" height="3.0999999999999996" rx="0.6" fill="#5f5f5f" transform="rotate(22.5 7 7)"/><rect x="5.5" y="-0.09999999999999964" width="3.0" height="3.0999999999999996" rx="0.6" fill="#5f5f5f" transform="rotate(67.5 7 7)"/><rect x="5.5" y="-0.09999999999999964" width="3.0" height="3.0999999999999996" rx="0.6" fill="#5f5f5f" transform="rotate(112.5 7 7)"/><rect x="5.5" y="-0.09999999999999964" width="3.0" height="3.0999999999999996" rx="0.6" fill="#5f5f5f" transform="rotate(157.5 7 7)"/><rect x="5.5" y="-0.09999999999999964" width="3.0" height="3.0999999999999996" rx="0.6" fill="#5f5f5f" transform="rotate(202.5 7 7)"/><rect x="5.5" y="-0.09999999999999964" width="3.0" height="3.0999999999999996" rx="0.6" fill="#5f5f5f" transform="rotate(247.5 7 7)"/><rect x="5.5" y="-0.09999999999999964" width="3.0" height="3.0999999999999996" rx="0.6" fill="#5f5f5f" transform="rotate(292.5 7 7)"/><rect x="5.5" y="-0.09999999999999964" width="3.0" height="3.0999999999999996" rx="0.6" fill="#5f5f5f" transform="rotate(337.5 7 7)"/><circle cx="7" cy="7" r="2.1" fill="#fff"/></svg>
<div style="position:absolute;left:17px;top:391px;width:1501px;height:56px;background:#f9f9f9"></div>
<div style="position:absolute;left:17px;top:447px;width:1501px;height:1px;background:#ebebf2"></div>
<div style="position:absolute;left:27px;top:411px;width:14px;height:14px;background:#fff;border:2px solid #a0a0a0;border-radius:4px"></div>
<div class="t" style="left:120px;top:401.84px;font-size:12px;font-weight:400;color:#55555f;letter-spacing:-0.08px">Aaron Farly</div>
<svg style="position:absolute;left:119.5px;top:420px" width="14" height="14" viewBox="0 0 14 14"><circle cx="7" cy="7" r="7" fill="#ff8c0a"/><rect x="6" y="2.8" width="2.2" height="2" fill="#fff"/><path d="M4.8 6 L8.3 6 L8.3 10 L9.3 10 L9.3 11.5 L4.8 11.5 L4.8 10 L5.9 10 L5.9 7.4 L4.8 7.4 Z" fill="#fff"/></svg>
<svg style="position:absolute;left:147px;top:419px" width="15" height="17" viewBox="0 0 15 17"><path d="M0.8 9.3 L9 1.2 L14.2 6.4 L6.1 14.2 Z" fill="#fff" stroke="#6a9440" stroke-width="0.9" stroke-linejoin="round"/><path d="M7.3 3.8 L11.9 8.4" stroke="#3f9070" stroke-width="2" stroke-dasharray="1.1 0.5"/><path d="M2.8 8.8 C3.8 7.4 6.2 7.6 7.4 9 L8.6 10.2 L7.2 12.2 C5.4 12.2 3.2 11 2.8 8.8 Z" fill="#058a05"/><path d="M9 6.8 C11 6.2 13.8 7 14.2 9 C14.4 10.6 12.8 12.4 10.6 13 L8.4 13.2 L6.8 12.6 L9.6 10.4 C10.4 9.4 10 8 9 6.8 Z" fill="#058a05"/><rect x="4.8" y="13.6" width="6.8" height="2.4" rx="1.1" fill="#058a05"/></svg>
<div class="t" style="left:408.5px;top:413.84px;font-size:12px;font-weight:400;color:#55555f;letter-spacing:-0.1px">aaronfarly@farly.hapana.com</div>
<div class="t" style="left:603.5px;top:413.84px;font-size:12px;font-weight:400;color:#55555f;letter-spacing:-0.15px">343243242</div>
<div class="t" style="left:753.5px;top:413.84px;font-size:12px;font-weight:400;color:#55555f;">Male</div>
<svg style="position:absolute;left:903px;top:411.0px" width="14" height="14" viewBox="0 0 14 14"><circle cx="7" cy="7" r="7" fill="#f00000"/><path d="M4.3 4.3 L9.7 9.7 M9.7 4.3 L4.3 9.7" stroke="#fff" stroke-width="2.2"/></svg>
<div class="t" style="left:920px;top:413.84px;font-size:12px;font-weight:400;color:#55555f;letter-spacing:-0.15px">0404040</div>
<svg style="position:absolute;left:1293px;top:410.5px" width="17" height="14" viewBox="0 0 17 14"><rect x="0.6" y="0.6" width="15.8" height="12.4" rx="1.5" fill="#fff" stroke="#5f5f5f" stroke-width="1.2"/><rect x="0.6" y="0.6" width="15.8" height="3" fill="#5f5f5f"/><rect x="3.5" y="5.5" width="11" height="1" fill="#5f5f5f"/><rect x="3.5" y="8" width="11" height="1.2" fill="#999"/><rect x="3.5" y="10.5" width="11" height="1" fill="#5f5f5f"/><rect x="2" y="5.5" width="1" height="1" fill="#5f5f5f"/><rect x="2" y="8" width="1" height="1" fill="#5f5f5f"/><rect x="2" y="10.5" width="1" height="1" fill="#5f5f5f"/></svg>
<svg style="position:absolute;left:1319px;top:409.5px" width="14" height="16" viewBox="0 0 14 16"><path d="M0 0 L9 0 L9 5 L14 5 L14 16 L0 16 Z" fill="#5f5f5f"/><path d="M10 0 L14 4 L10 4 Z" fill="#5f5f5f"/></svg>
<svg style="position:absolute;left:1343px;top:410.5px" width="14" height="14" viewBox="0 0 14 14"><circle cx="7" cy="7" r="7" fill="#5f5f5f"/><rect x="6" y="2.8" width="2.2" height="2" fill="#fff"/><path d="M4.8 6 L8.3 6 L8.3 10 L9.3 10 L9.3 11.5 L4.8 11.5 L4.8 10 L5.9 10 L5.9 7.4 L4.8 7.4 Z" fill="#fff"/></svg>
<svg style="position:absolute;left:1367px;top:409.5px" width="15" height="16" viewBox="0 0 15 16"><rect x="0.5" y="2.5" width="14" height="13" fill="#fff" stroke="#5f5f5f" stroke-width="1"/><rect x="0.5" y="2.5" width="14" height="2.5" fill="#5f5f5f"/><rect x="4" y="5" width="0.9" height="10.5" fill="#5f5f5f"/><rect x="7.5" y="5" width="0.9" height="10.5" fill="#5f5f5f"/><rect x="11" y="5" width="0.9" height="10.5" fill="#5f5f5f"/><rect x="0.5" y="8" width="14" height="0.9" fill="#5f5f5f"/><rect x="0.5" y="11.5" width="14" height="0.9" fill="#5f5f5f"/><path d="M3 3.5 L3 1.6 C3 0.2 5.6 0.2 5.6 1.6 L5.6 3.5" fill="none" stroke="#5f5f5f" stroke-width="1.1"/><path d="M9.4 3.5 L9.4 1.6 C9.4 0.2 12 0.2 12 1.6 L12 3.5" fill="none" stroke="#5f5f5f" stroke-width="1.1"/></svg>
<svg style="position:absolute;left:1392px;top:410.5px" width="21" height="14" viewBox="0 0 21 14"><rect x="0" y="0" width="21" height="3.2" rx="1" fill="#5f5f5f"/><rect x="0" y="5.3" width="21" height="8.7" rx="1" fill="#5f5f5f"/><rect x="2.5" y="10.5" width="2.5" height="1" fill="#fff"/><rect x="5.5" y="10.5" width="3" height="1" fill="#fff"/></svg>
<svg style="position:absolute;left:1422px;top:410.5px" width="14" height="14" viewBox="0 0 14 14"><path d="M13.5 0.5 L9.5 4.5" stroke="#5f5f5f" stroke-width="1.8"/><path d="M7.6 2 L7.6 6.4 L12 6.4 Z" fill="#5f5f5f"/><path d="M0.5 13.5 L4.5 9.5" stroke="#5f5f5f" stroke-width="1.8"/><path d="M2 7.6 L6.4 7.6 L6.4 12 Z" fill="#5f5f5f"/></svg>
<svg style="position:absolute;left:1446px;top:410.5px" width="11" height="13" viewBox="0 0 11 13"><path d="M2.5 6 L2.5 4 C2.5 1.5 4 0.8 5.5 0.8 C7 0.8 8.5 1.5 8.5 4 L8.5 6" fill="none" stroke="#5f5f5f" stroke-width="1.8"/><rect x="0.5" y="5.8" width="10" height="7" rx="0.8" fill="#5f5f5f"/></svg>
<svg style="position:absolute;left:1469px;top:410.5px" width="14" height="14" viewBox="0 0 14 14"><circle cx="7" cy="7" r="5.0" fill="#5f5f5f"/><rect x="5.5" y="-0.09999999999999964" width="3.0" height="3.0999999999999996" rx="0.6" fill="#5f5f5f" transform="rotate(22.5 7 7)"/><rect x="5.5" y="-0.09999999999999964" width="3.0" height="3.0999999999999996" rx="0.6" fill="#5f5f5f" transform="rotate(67.5 7 7)"/><rect x="5.5" y="-0.09999999999999964" width="3.0" height="3.0999999999999996" rx="0.6" fill="#5f5f5f" transform="rotate(112.5 7 7)"/><rect x="5.5" y="-0.09999999999999964" width="3.0" height="3.0999999999999996" rx="0.6" fill="#5f5f5f" transform="rotate(157.5 7 7)"/><rect x="5.5" y="-0.09999999999999964" width="3.0" height="3.0999999999999996" rx="0.6" fill="#5f5f5f" transform="rotate(202.5 7 7)"/><rect x="5.5" y="-0.09999999999999964" width="3.0" height="3.0999999999999996" rx="0.6" fill="#5f5f5f" transform="rotate(247.5 7 7)"/><rect x="5.5" y="-0.09999999999999964" width="3.0" height="3.0999999999999996" rx="0.6" fill="#5f5f5f" transform="rotate(292.5 7 7)"/><rect x="5.5" y="-0.09999999999999964" width="3.0" height="3.0999999999999996" rx="0.6" fill="#5f5f5f" transform="rotate(337.5 7 7)"/><circle cx="7" cy="7" r="2.1" fill="#fff"/></svg>
<div style="position:absolute;left:17px;top:448px;width:1501px;height:56px;background:#fff"></div>
<div style="position:absolute;left:17px;top:504px;width:1501px;height:1px;background:#ebebf2"></div>
<div style="position:absolute;left:27px;top:468px;width:14px;height:14px;background:#fff;border:2px solid #a0a0a0;border-radius:4px"></div>
<div class="t" style="left:120px;top:458.84px;font-size:12px;font-weight:400;color:#55555f;letter-spacing:-0.08px">Abhishek Sharma</div>
<svg style="position:absolute;left:120px;top:476px" width="15" height="17" viewBox="0 0 15 17"><path d="M0.8 9.3 L9 1.2 L14.2 6.4 L6.1 14.2 Z" fill="#fff" stroke="#6a9440" stroke-width="0.9" stroke-linejoin="round"/><path d="M7.3 3.8 L11.9 8.4" stroke="#3f9070" stroke-width="2" stroke-dasharray="1.1 0.5"/><path d="M2.8 8.8 C3.8 7.4 6.2 7.6 7.4 9 L8.6 10.2 L7.2 12.2 C5.4 12.2 3.2 11 2.8 8.8 Z" fill="#058a05"/><path d="M9 6.8 C11 6.2 13.8 7 14.2 9 C14.4 10.6 12.8 12.4 10.6 13 L8.4 13.2 L6.8 12.6 L9.6 10.4 C10.4 9.4 10 8 9 6.8 Z" fill="#058a05"/><rect x="4.8" y="13.6" width="6.8" height="2.4" rx="1.1" fill="#058a05"/></svg>
<div class="t" style="left:408.5px;top:470.84px;font-size:12px;font-weight:400;color:#55555f;letter-spacing:-0.1px">abhisheklivetest543@gmail.com</div>
<div class="t" style="left:603.5px;top:470.84px;font-size:12px;font-weight:400;color:#55555f;letter-spacing:-0.15px"><span style="margin:0 -1.1px">1</span>23<span style="margin:0 -1.1px">1</span>234</div>
<div class="t" style="left:753.5px;top:470.84px;font-size:12px;font-weight:400;color:#55555f;">Male</div>
<svg style="position:absolute;left:903px;top:468.0px" width="14" height="14" viewBox="0 0 14 14"><circle cx="7" cy="7" r="7" fill="#f00000"/><path d="M4.3 4.3 L9.7 9.7 M9.7 4.3 L4.3 9.7" stroke="#fff" stroke-width="2.2"/></svg>
<div class="t" style="left:920px;top:470.84px;font-size:12px;font-weight:400;color:#55555f;letter-spacing:-0.15px">65235665235</div>
<svg style="position:absolute;left:1293px;top:467.5px" width="17" height="14" viewBox="0 0 17 14"><rect x="0.6" y="0.6" width="15.8" height="12.4" rx="1.5" fill="#fff" stroke="#5f5f5f" stroke-width="1.2"/><rect x="0.6" y="0.6" width="15.8" height="3" fill="#5f5f5f"/><rect x="3.5" y="5.5" width="11" height="1" fill="#5f5f5f"/><rect x="3.5" y="8" width="11" height="1.2" fill="#999"/><rect x="3.5" y="10.5" width="11" height="1" fill="#5f5f5f"/><rect x="2" y="5.5" width="1" height="1" fill="#5f5f5f"/><rect x="2" y="8" width="1" height="1" fill="#5f5f5f"/><rect x="2" y="10.5" width="1" height="1" fill="#5f5f5f"/></svg>
<svg style="position:absolute;left:1319px;top:466.5px" width="14" height="16" viewBox="0 0 14 16"><path d="M0 0 L9 0 L9 5 L14 5 L14 16 L0 16 Z" fill="#5f5f5f"/><path d="M10 0 L14 4 L10 4 Z" fill="#5f5f5f"/></svg>
<svg style="position:absolute;left:1343px;top:467.5px" width="14" height="14" viewBox="0 0 14 14"><circle cx="7" cy="7" r="7" fill="#5f5f5f"/><rect x="6" y="2.8" width="2.2" height="2" fill="#fff"/><path d="M4.8 6 L8.3 6 L8.3 10 L9.3 10 L9.3 11.5 L4.8 11.5 L4.8 10 L5.9 10 L5.9 7.4 L4.8 7.4 Z" fill="#fff"/></svg>
<svg style="position:absolute;left:1367px;top:466.5px" width="15" height="16" viewBox="0 0 15 16"><rect x="0.5" y="2.5" width="14" height="13" fill="#fff" stroke="#5f5f5f" stroke-width="1"/><rect x="0.5" y="2.5" width="14" height="2.5" fill="#5f5f5f"/><rect x="4" y="5" width="0.9" height="10.5" fill="#5f5f5f"/><rect x="7.5" y="5" width="0.9" height="10.5" fill="#5f5f5f"/><rect x="11" y="5" width="0.9" height="10.5" fill="#5f5f5f"/><rect x="0.5" y="8" width="14" height="0.9" fill="#5f5f5f"/><rect x="0.5" y="11.5" width="14" height="0.9" fill="#5f5f5f"/><path d="M3 3.5 L3 1.6 C3 0.2 5.6 0.2 5.6 1.6 L5.6 3.5" fill="none" stroke="#5f5f5f" stroke-width="1.1"/><path d="M9.4 3.5 L9.4 1.6 C9.4 0.2 12 0.2 12 1.6 L12 3.5" fill="none" stroke="#5f5f5f" stroke-width="1.1"/></svg>
<svg style="position:absolute;left:1392px;top:467.5px" width="21" height="14" viewBox="0 0 21 14"><rect x="0" y="0" width="21" height="3.2" rx="1" fill="#5f5f5f"/><rect x="0" y="5.3" width="21" height="8.7" rx="1" fill="#5f5f5f"/><rect x="2.5" y="10.5" width="2.5" height="1" fill="#fff"/><rect x="5.5" y="10.5" width="3" height="1" fill="#fff"/></svg>
<svg style="position:absolute;left:1422px;top:467.5px" width="14" height="14" viewBox="0 0 14 14"><path d="M13.5 0.5 L9.5 4.5" stroke="#5f5f5f" stroke-width="1.8"/><path d="M7.6 2 L7.6 6.4 L12 6.4 Z" fill="#5f5f5f"/><path d="M0.5 13.5 L4.5 9.5" stroke="#5f5f5f" stroke-width="1.8"/><path d="M2 7.6 L6.4 7.6 L6.4 12 Z" fill="#5f5f5f"/></svg>
<svg style="position:absolute;left:1446px;top:467.5px" width="11" height="13" viewBox="0 0 11 13"><path d="M2.5 6 L2.5 4 C2.5 1.5 4 0.8 5.5 0.8 C7 0.8 8.5 1.5 8.5 4 L8.5 6" fill="none" stroke="#5f5f5f" stroke-width="1.8"/><rect x="0.5" y="5.8" width="10" height="7" rx="0.8" fill="#5f5f5f"/></svg>
<svg style="position:absolute;left:1469px;top:467.5px" width="14" height="14" viewBox="0 0 14 14"><circle cx="7" cy="7" r="5.0" fill="#5f5f5f"/><rect x="5.5" y="-0.09999999999999964" width="3.0" height="3.0999999999999996" rx="0.6" fill="#5f5f5f" transform="rotate(22.5 7 7)"/><rect x="5.5" y="-0.09999999999999964" width="3.0" height="3.0999999999999996" rx="0.6" fill="#5f5f5f" transform="rotate(67.5 7 7)"/><rect x="5.5" y="-0.09999999999999964" width="3.0" height="3.0999999999999996" rx="0.6" fill="#5f5f5f" transform="rotate(112.5 7 7)"/><rect x="5.5" y="-0.09999999999999964" width="3.0" height="3.0999999999999996" rx="0.6" fill="#5f5f5f" transform="rotate(157.5 7 7)"/><rect x="5.5" y="-0.09999999999999964" width="3.0" height="3.0999999999999996" rx="0.6" fill="#5f5f5f" transform="rotate(202.5 7 7)"/><rect x="5.5" y="-0.09999999999999964" width="3.0" height="3.0999999999999996" rx="0.6" fill="#5f5f5f" transform="rotate(247.5 7 7)"/><rect x="5.5" y="-0.09999999999999964" width="3.0" height="3.0999999999999996" rx="0.6" fill="#5f5f5f" transform="rotate(292.5 7 7)"/><rect x="5.5" y="-0.09999999999999964" width="3.0" height="3.0999999999999996" rx="0.6" fill="#5f5f5f" transform="rotate(337.5 7 7)"/><circle cx="7" cy="7" r="2.1" fill="#fff"/></svg>
<div style="position:absolute;left:17px;top:505px;width:1501px;height:56px;background:#f9f9f9"></div>
<div style="position:absolute;left:17px;top:561px;width:1501px;height:1px;background:#ebebf2"></div>
<div style="position:absolute;left:27px;top:525px;width:14px;height:14px;background:#fff;border:2px solid #a0a0a0;border-radius:4px"></div>
<div class="t" style="left:120px;top:515.84px;font-size:12px;font-weight:400;color:#55555f;letter-spacing:-0.08px">Adam Test</div>
<svg style="position:absolute;left:120px;top:533px" width="15" height="17" viewBox="0 0 15 17"><path d="M0.8 9.3 L9 1.2 L14.2 6.4 L6.1 14.2 Z" fill="#fff" stroke="#6a9440" stroke-width="0.9" stroke-linejoin="round"/><path d="M7.3 3.8 L11.9 8.4" stroke="#3f9070" stroke-width="2" stroke-dasharray="1.1 0.5"/><path d="M2.8 8.8 C3.8 7.4 6.2 7.6 7.4 9 L8.6 10.2 L7.2 12.2 C5.4 12.2 3.2 11 2.8 8.8 Z" fill="#058a05"/><path d="M9 6.8 C11 6.2 13.8 7 14.2 9 C14.4 10.6 12.8 12.4 10.6 13 L8.4 13.2 L6.8 12.6 L9.6 10.4 C10.4 9.4 10 8 9 6.8 Z" fill="#058a05"/><rect x="4.8" y="13.6" width="6.8" height="2.4" rx="1.1" fill="#058a05"/></svg>
<div class="t" style="left:408.5px;top:527.84px;font-size:12px;font-weight:400;color:#55555f;letter-spacing:-0.1px">adam.harris+test@test.com</div>
<div class="t" style="left:603.5px;top:527.84px;font-size:12px;font-weight:400;color:#55555f;letter-spacing:-0.15px">3<span style="margin:0 -1.1px">1</span>64683</div>
<svg style="position:absolute;left:903px;top:525.0px" width="14" height="14" viewBox="0 0 14 14"><circle cx="7" cy="7" r="7" fill="#f00000"/><path d="M4.3 4.3 L9.7 9.7 M9.7 4.3 L4.3 9.7" stroke="#fff" stroke-width="2.2"/></svg>
<div class="t" style="left:920px;top:527.84px;font-size:12px;font-weight:400;color:#55555f;letter-spacing:-0.15px">04058<span style="margin:0 -1.1px">1</span>634<span style="margin:0 -1.1px">1</span></div>
<svg style="position:absolute;left:1293px;top:524.5px" width="17" height="14" viewBox="0 0 17 14"><rect x="0.6" y="0.6" width="15.8" height="12.4" rx="1.5" fill="#fff" stroke="#5f5f5f" stroke-width="1.2"/><rect x="0.6" y="0.6" width="15.8" height="3" fill="#5f5f5f"/><rect x="3.5" y="5.5" width="11" height="1" fill="#5f5f5f"/><rect x="3.5" y="8" width="11" height="1.2" fill="#999"/><rect x="3.5" y="10.5" width="11" height="1" fill="#5f5f5f"/><rect x="2" y="5.5" width="1" height="1" fill="#5f5f5f"/><rect x="2" y="8" width="1" height="1" fill="#5f5f5f"/><rect x="2" y="10.5" width="1" height="1" fill="#5f5f5f"/></svg>
<svg style="position:absolute;left:1319px;top:523.5px" width="14" height="16" viewBox="0 0 14 16"><path d="M0 0 L9 0 L9 5 L14 5 L14 16 L0 16 Z" fill="#5f5f5f"/><path d="M10 0 L14 4 L10 4 Z" fill="#5f5f5f"/></svg>
<svg style="position:absolute;left:1343px;top:524.5px" width="14" height="14" viewBox="0 0 14 14"><circle cx="7" cy="7" r="7" fill="#5f5f5f"/><rect x="6" y="2.8" width="2.2" height="2" fill="#fff"/><path d="M4.8 6 L8.3 6 L8.3 10 L9.3 10 L9.3 11.5 L4.8 11.5 L4.8 10 L5.9 10 L5.9 7.4 L4.8 7.4 Z" fill="#fff"/></svg>
<svg style="position:absolute;left:1367px;top:523.5px" width="15" height="16" viewBox="0 0 15 16"><rect x="0.5" y="2.5" width="14" height="13" fill="#fff" stroke="#5f5f5f" stroke-width="1"/><rect x="0.5" y="2.5" width="14" height="2.5" fill="#5f5f5f"/><rect x="4" y="5" width="0.9" height="10.5" fill="#5f5f5f"/><rect x="7.5" y="5" width="0.9" height="10.5" fill="#5f5f5f"/><rect x="11" y="5" width="0.9" height="10.5" fill="#5f5f5f"/><rect x="0.5" y="8" width="14" height="0.9" fill="#5f5f5f"/><rect x="0.5" y="11.5" width="14" height="0.9" fill="#5f5f5f"/><path d="M3 3.5 L3 1.6 C3 0.2 5.6 0.2 5.6 1.6 L5.6 3.5" fill="none" stroke="#5f5f5f" stroke-width="1.1"/><path d="M9.4 3.5 L9.4 1.6 C9.4 0.2 12 0.2 12 1.6 L12 3.5" fill="none" stroke="#5f5f5f" stroke-width="1.1"/></svg>
<svg style="position:absolute;left:1392px;top:524.5px" width="21" height="14" viewBox="0 0 21 14"><rect x="0" y="0" width="21" height="3.2" rx="1" fill="#5f5f5f"/><rect x="0" y="5.3" width="21" height="8.7" rx="1" fill="#5f5f5f"/><rect x="2.5" y="10.5" width="2.5" height="1" fill="#fff"/><rect x="5.5" y="10.5" width="3" height="1" fill="#fff"/></svg>
<svg style="position:absolute;left:1422px;top:524.5px" width="14" height="14" viewBox="0 0 14 14"><path d="M13.5 0.5 L9.5 4.5" stroke="#5f5f5f" stroke-width="1.8"/><path d="M7.6 2 L7.6 6.4 L12 6.4 Z" fill="#5f5f5f"/><path d="M0.5 13.5 L4.5 9.5" stroke="#5f5f5f" stroke-width="1.8"/><path d="M2 7.6 L6.4 7.6 L6.4 12 Z" fill="#5f5f5f"/></svg>
<svg style="position:absolute;left:1446px;top:524.5px" width="11" height="13" viewBox="0 0 11 13"><path d="M2.5 6 L2.5 4 C2.5 1.5 4 0.8 5.5 0.8 C7 0.8 8.5 1.5 8.5 4 L8.5 6" fill="none" stroke="#5f5f5f" stroke-width="1.8"/><rect x="0.5" y="5.8" width="10" height="7" rx="0.8" fill="#5f5f5f"/></svg>
<svg style="position:absolute;left:1469px;top:524.5px" width="14" height="14" viewBox="0 0 14 14"><circle cx="7" cy="7" r="5.0" fill="#5f5f5f"/><rect x="5.5" y="-0.09999999999999964" width="3.0" height="3.0999999999999996" rx="0.6" fill="#5f5f5f" transform="rotate(22.5 7 7)"/><rect x="5.5" y="-0.09999999999999964" width="3.0" height="3.0999999999999996" rx="0.6" fill="#5f5f5f" transform="rotate(67.5 7 7)"/><rect x="5.5" y="-0.09999999999999964" width="3.0" height="3.0999999999999996" rx="0.6" fill="#5f5f5f" transform="rotate(112.5 7 7)"/><rect x="5.5" y="-0.09999999999999964" width="3.0" height="3.0999999999999996" rx="0.6" fill="#5f5f5f" transform="rotate(157.5 7 7)"/><rect x="5.5" y="-0.09999999999999964" width="3.0" height="3.0999999999999996" rx="0.6" fill="#5f5f5f" transform="rotate(202.5 7 7)"/><rect x="5.5" y="-0.09999999999999964" width="3.0" height="3.0999999999999996" rx="0.6" fill="#5f5f5f" transform="rotate(247.5 7 7)"/><rect x="5.5" y="-0.09999999999999964" width="3.0" height="3.0999999999999996" rx="0.6" fill="#5f5f5f" transform="rotate(292.5 7 7)"/><rect x="5.5" y="-0.09999999999999964" width="3.0" height="3.0999999999999996" rx="0.6" fill="#5f5f5f" transform="rotate(337.5 7 7)"/><circle cx="7" cy="7" r="2.1" fill="#fff"/></svg>
<div style="position:absolute;left:17px;top:562px;width:1501px;height:36px;background:#fff"></div>
<div style="position:absolute;left:17px;top:598px;width:1501px;height:1px;background:#ebebf2"></div>
<div style="position:absolute;left:27px;top:572px;width:14px;height:14px;background:#fff;border:2px solid #a0a0a0;border-radius:4px"></div>
<div class="t" style="left:120px;top:574.84px;font-size:12px;font-weight:400;color:#55555f;letter-spacing:-0.08px">Al Superman</div>
<div class="t" style="left:408.5px;top:574.84px;font-size:12px;font-weight:400;color:#55555f;letter-spacing:-0.1px">alan@sachfam.com</div>
<div class="t" style="left:603.5px;top:574.84px;font-size:12px;font-weight:400;color:#55555f;letter-spacing:-0.15px">55<span style="margin:0 -1.1px">1</span>22</div>
<div class="t" style="left:753.5px;top:574.84px;font-size:12px;font-weight:400;color:#55555f;">Male</div>
<svg style="position:absolute;left:903px;top:572.5px" width="14" height="14" viewBox="0 0 14 14"><circle cx="7" cy="7" r="7" fill="#f00000"/><path d="M4.3 4.3 L9.7 9.7 M9.7 4.3 L4.3 9.7" stroke="#fff" stroke-width="2.2"/></svg>
<div class="t" style="left:920px;top:574.84px;font-size:12px;font-weight:400;color:#55555f;letter-spacing:-0.15px">6<span style="margin:0 -1.1px">1</span>040488432<span style="margin:0 -1.1px">1</span></div>
<svg style="position:absolute;left:1293px;top:572px" width="17" height="14" viewBox="0 0 17 14"><rect x="0.6" y="0.6" width="15.8" height="12.4" rx="1.5" fill="#fff" stroke="#5f5f5f" stroke-width="1.2"/><rect x="0.6" y="0.6" width="15.8" height="3" fill="#5f5f5f"/><rect x="3.5" y="5.5" width="11" height="1" fill="#5f5f5f"/><rect x="3.5" y="8" width="11" height="1.2" fill="#999"/><rect x="3.5" y="10.5" width="11" height="1" fill="#5f5f5f"/><rect x="2" y="5.5" width="1" height="1" fill="#5f5f5f"/><rect x="2" y="8" width="1" height="1" fill="#5f5f5f"/><rect x="2" y="10.5" width="1" height="1" fill="#5f5f5f"/></svg>
<svg style="position:absolute;left:1319px;top:571px" width="14" height="16" viewBox="0 0 14 16"><path d="M0 0 L9 0 L9 5 L14 5 L14 16 L0 16 Z" fill="#5f5f5f"/><path d="M10 0 L14 4 L10 4 Z" fill="#5f5f5f"/></svg>
<svg style="position:absolute;left:1343px;top:572px" width="14" height="14" viewBox="0 0 14 14"><circle cx="7" cy="7" r="7" fill="#5f5f5f"/><rect x="6" y="2.8" width="2.2" height="2" fill="#fff"/><path d="M4.8 6 L8.3 6 L8.3 10 L9.3 10 L9.3 11.5 L4.8 11.5 L4.8 10 L5.9 10 L5.9 7.4 L4.8 7.4 Z" fill="#fff"/></svg>
<svg style="position:absolute;left:1367px;top:571px" width="15" height="16" viewBox="0 0 15 16"><rect x="0.5" y="2.5" width="14" height="13" fill="#fff" stroke="#5f5f5f" stroke-width="1"/><rect x="0.5" y="2.5" width="14" height="2.5" fill="#5f5f5f"/><rect x="4" y="5" width="0.9" height="10.5" fill="#5f5f5f"/><rect x="7.5" y="5" width="0.9" height="10.5" fill="#5f5f5f"/><rect x="11" y="5" width="0.9" height="10.5" fill="#5f5f5f"/><rect x="0.5" y="8" width="14" height="0.9" fill="#5f5f5f"/><rect x="0.5" y="11.5" width="14" height="0.9" fill="#5f5f5f"/><path d="M3 3.5 L3 1.6 C3 0.2 5.6 0.2 5.6 1.6 L5.6 3.5" fill="none" stroke="#5f5f5f" stroke-width="1.1"/><path d="M9.4 3.5 L9.4 1.6 C9.4 0.2 12 0.2 12 1.6 L12 3.5" fill="none" stroke="#5f5f5f" stroke-width="1.1"/></svg>
<svg style="position:absolute;left:1392px;top:572px" width="21" height="14" viewBox="0 0 21 14"><rect x="0" y="0" width="21" height="3.2" rx="1" fill="#5f5f5f"/><rect x="0" y="5.3" width="21" height="8.7" rx="1" fill="#5f5f5f"/><rect x="2.5" y="10.5" width="2.5" height="1" fill="#fff"/><rect x="5.5" y="10.5" width="3" height="1" fill="#fff"/></svg>
<svg style="position:absolute;left:1422px;top:572px" width="14" height="14" viewBox="0 0 14 14"><path d="M13.5 0.5 L9.5 4.5" stroke="#5f5f5f" stroke-width="1.8"/><path d="M7.6 2 L7.6 6.4 L12 6.4 Z" fill="#5f5f5f"/><path d="M0.5 13.5 L4.5 9.5" stroke="#5f5f5f" stroke-width="1.8"/><path d="M2 7.6 L6.4 7.6 L6.4 12 Z" fill="#5f5f5f"/></svg>
<svg style="position:absolute;left:1446px;top:572px" width="11" height="13" viewBox="0 0 11 13"><path d="M2.5 6 L2.5 4 C2.5 1.5 4 0.8 5.5 0.8 C7 0.8 8.5 1.5 8.5 4 L8.5 6" fill="none" stroke="#5f5f5f" stroke-width="1.8"/><rect x="0.5" y="5.8" width="10" height="7" rx="0.8" fill="#5f5f5f"/></svg>
<svg style="position:absolute;left:1469px;top:572px" width="14" height="14" viewBox="0 0 14 14"><circle cx="7" cy="7" r="5.0" fill="#5f5f5f"/><rect x="5.5" y="-0.09999999999999964" width="3.0" height="3.0999999999999996" rx="0.6" fill="#5f5f5f" transform="rotate(22.5 7 7)"/><rect x="5.5" y="-0.09999999999999964" width="3.0" height="3.0999999999999996" rx="0.6" fill="#5f5f5f" transform="rotate(67.5 7 7)"/><rect x="5.5" y="-0.09999999999999964" width="3.0" height="3.0999999999999996" rx="0.6" fill="#5f5f5f" transform="rotate(112.5 7 7)"/><rect x="5.5" y="-0.09999999999999964" width="3.0" height="3.0999999999999996" rx="0.6" fill="#5f5f5f" transform="rotate(157.5 7 7)"/><rect x="5.5" y="-0.09999999999999964" width="3.0" height="3.0999999999999996" rx="0.6" fill="#5f5f5f" transform="rotate(202.5 7 7)"/><rect x="5.5" y="-0.09999999999999964" width="3.0" height="3.0999999999999996" rx="0.6" fill="#5f5f5f" transform="rotate(247.5 7 7)"/><rect x="5.5" y="-0.09999999999999964" width="3.0" height="3.0999999999999996" rx="0.6" fill="#5f5f5f" transform="rotate(292.5 7 7)"/><rect x="5.5" y="-0.09999999999999964" width="3.0" height="3.0999999999999996" rx="0.6" fill="#5f5f5f" transform="rotate(337.5 7 7)"/><circle cx="7" cy="7" r="2.1" fill="#fff"/></svg>
<div style="position:absolute;left:17px;top:599px;width:1501px;height:56px;background:#f9f9f9"></div>
<div style="position:absolute;left:17px;top:655px;width:1501px;height:1px;background:#ebebf2"></div>
<div style="position:absolute;left:27px;top:619px;width:14px;height:14px;background:#fff;border:2px solid #a0a0a0;border-radius:4px"></div>
<div class="t" style="left:120px;top:609.84px;font-size:12px;font-weight:400;color:#55555f;letter-spacing:-0.08px">Alice Russel</div>
<svg style="position:absolute;left:120px;top:627px" width="15" height="17" viewBox="0 0 15 17"><path d="M0.8 9.3 L9 1.2 L14.2 6.4 L6.1 14.2 Z" fill="#fff" stroke="#6a9440" stroke-width="0.9" stroke-linejoin="round"/><path d="M7.3 3.8 L11.9 8.4" stroke="#3f9070" stroke-width="2" stroke-dasharray="1.1 0.5"/><path d="M2.8 8.8 C3.8 7.4 6.2 7.6 7.4 9 L8.6 10.2 L7.2 12.2 C5.4 12.2 3.2 11 2.8 8.8 Z" fill="#058a05"/><path d="M9 6.8 C11 6.2 13.8 7 14.2 9 C14.4 10.6 12.8 12.4 10.6 13 L8.4 13.2 L6.8 12.6 L9.6 10.4 C10.4 9.4 10 8 9 6.8 Z" fill="#058a05"/><rect x="4.8" y="13.6" width="6.8" height="2.4" rx="1.1" fill="#058a05"/></svg>
<div class="t" style="left:408.5px;top:621.84px;font-size:12px;font-weight:400;color:#55555f;letter-spacing:-0.1px">rick.jones+ar@hapana.com</div>
<div class="t" style="left:603.5px;top:621.84px;font-size:12px;font-weight:400;color:#55555f;letter-spacing:-0.15px">789<span style="margin:0 -1.1px">1</span>234</div>
<div class="t" style="left:753.5px;top:621.84px;font-size:12px;font-weight:400;color:#55555f;">Female</div>
<svg style="position:absolute;left:903px;top:619.0px" width="14" height="14" viewBox="0 0 14 14"><circle cx="7" cy="7" r="7" fill="#7f9fd5"/><path d="M3.5 7 L6 9.5 L10.8 4.7" fill="none" stroke="#fff" stroke-width="2"/></svg>
<div class="t" style="left:920px;top:621.84px;font-size:12px;font-weight:400;color:#55555f;letter-spacing:-0.15px">6<span style="margin:0 -1.1px">1</span>43229292</div>
<svg style="position:absolute;left:1293px;top:618.5px" width="17" height="14" viewBox="0 0 17 14"><rect x="0.6" y="0.6" width="15.8" height="12.4" rx="1.5" fill="#fff" stroke="#5f5f5f" stroke-width="1.2"/><rect x="0.6" y="0.6" width="15.8" height="3" fill="#5f5f5f"/><rect x="3.5" y="5.5" width="11" height="1" fill="#5f5f5f"/><rect x="3.5" y="8" width="11" height="1.2" fill="#999"/><rect x="3.5" y="10.5" width="11" height="1" fill="#5f5f5f"/><rect x="2" y="5.5" width="1" height="1" fill="#5f5f5f"/><rect x="2" y="8" width="1" height="1" fill="#5f5f5f"/><rect x="2" y="10.5" width="1" height="1" fill="#5f5f5f"/></svg>
<svg style="position:absolute;left:1319px;top:617.5px" width="14" height="16" viewBox="0 0 14 16"><path d="M0 0 L9 0 L9 5 L14 5 L14 16 L0 16 Z" fill="#5f5f5f"/><path d="M10 0 L14 4 L10 4 Z" fill="#5f5f5f"/></svg>
<svg style="position:absolute;left:1343px;top:618.5px" width="14" height="14" viewBox="0 0 14 14"><circle cx="7" cy="7" r="7" fill="#5f5f5f"/><rect x="6" y="2.8" width="2.2" height="2" fill="#fff"/><path d="M4.8 6 L8.3 6 L8.3 10 L9.3 10 L9.3 11.5 L4.8 11.5 L4.8 10 L5.9 10 L5.9 7.4 L4.8 7.4 Z" fill="#fff"/></svg>
<svg style="position:absolute;left:1367px;top:617.5px" width="15" height="16" viewBox="0 0 15 16"><rect x="0.5" y="2.5" width="14" height="13" fill="#fff" stroke="#5f5f5f" stroke-width="1"/><rect x="0.5" y="2.5" width="14" height="2.5" fill="#5f5f5f"/><rect x="4" y="5" width="0.9" height="10.5" fill="#5f5f5f"/><rect x="7.5" y="5" width="0.9" height="10.5" fill="#5f5f5f"/><rect x="11" y="5" width="0.9" height="10.5" fill="#5f5f5f"/><rect x="0.5" y="8" width="14" height="0.9" fill="#5f5f5f"/><rect x="0.5" y="11.5" width="14" height="0.9" fill="#5f5f5f"/><path d="M3 3.5 L3 1.6 C3 0.2 5.6 0.2 5.6 1.6 L5.6 3.5" fill="none" stroke="#5f5f5f" stroke-width="1.1"/><path d="M9.4 3.5 L9.4 1.6 C9.4 0.2 12 0.2 12 1.6 L12 3.5" fill="none" stroke="#5f5f5f" stroke-width="1.1"/></svg>
<svg style="position:absolute;left:1392px;top:618.5px" width="21" height="14" viewBox="0 0 21 14"><rect x="0" y="0" width="21" height="3.2" rx="1" fill="#5f5f5f"/><rect x="0" y="5.3" width="21" height="8.7" rx="1" fill="#5f5f5f"/><rect x="2.5" y="10.5" width="2.5" height="1" fill="#fff"/><rect x="5.5" y="10.5" width="3" height="1" fill="#fff"/></svg>
<svg style="position:absolute;left:1422px;top:618.5px" width="14" height="14" viewBox="0 0 14 14"><path d="M13.5 0.5 L9.5 4.5" stroke="#5f5f5f" stroke-width="1.8"/><path d="M7.6 2 L7.6 6.4 L12 6.4 Z" fill="#5f5f5f"/><path d="M0.5 13.5 L4.5 9.5" stroke="#5f5f5f" stroke-width="1.8"/><path d="M2 7.6 L6.4 7.6 L6.4 12 Z" fill="#5f5f5f"/></svg>
<svg style="position:absolute;left:1446px;top:618.5px" width="11" height="13" viewBox="0 0 11 13"><path d="M2.5 6 L2.5 4 C2.5 1.5 4 0.8 5.5 0.8 C7 0.8 8.5 1.5 8.5 4 L8.5 6" fill="none" stroke="#5f5f5f" stroke-width="1.8"/><rect x="0.5" y="5.8" width="10" height="7" rx="0.8" fill="#5f5f5f"/></svg>
<svg style="position:absolute;left:1469px;top:618.5px" width="14" height="14" viewBox="0 0 14 14"><circle cx="7" cy="7" r="5.0" fill="#5f5f5f"/><rect x="5.5" y="-0.09999999999999964" width="3.0" height="3.0999999999999996" rx="0.6" fill="#5f5f5f" transform="rotate(22.5 7 7)"/><rect x="5.5" y="-0.09999999999999964" width="3.0" height="3.0999999999999996" rx="0.6" fill="#5f5f5f" transform="rotate(67.5 7 7)"/><rect x="5.5" y="-0.09999999999999964" width="3.0" height="3.0999999999999996" rx="0.6" fill="#5f5f5f" transform="rotate(112.5 7 7)"/><rect x="5.5" y="-0.09999999999999964" width="3.0" height="3.0999999999999996" rx="0.6" fill="#5f5f5f" transform="rotate(157.5 7 7)"/><rect x="5.5" y="-0.09999999999999964" width="3.0" height="3.0999999999999996" rx="0.6" fill="#5f5f5f" transform="rotate(202.5 7 7)"/><rect x="5.5" y="-0.09999999999999964" width="3.0" height="3.0999999999999996" rx="0.6" fill="#5f5f5f" transform="rotate(247.5 7 7)"/><rect x="5.5" y="-0.09999999999999964" width="3.0" height="3.0999999999999996" rx="0.6" fill="#5f5f5f" transform="rotate(292.5 7 7)"/><rect x="5.5" y="-0.09999999999999964" width="3.0" height="3.0999999999999996" rx="0.6" fill="#5f5f5f" transform="rotate(337.5 7 7)"/><circle cx="7" cy="7" r="2.1" fill="#fff"/></svg>
<div style="position:absolute;left:17px;top:656px;width:1501px;height:56px;background:#fff"></div>
<div style="position:absolute;left:17px;top:712px;width:1501px;height:1px;background:#ebebf2"></div>
<div style="position:absolute;left:27px;top:676px;width:14px;height:14px;background:#fff;border:2px solid #a0a0a0;border-radius:4px"></div>
<div class="t" style="left:120px;top:666.84px;font-size:12px;font-weight:400;color:#55555f;letter-spacing:-0.08px">Alvin Rollman</div>
<svg style="position:absolute;left:120px;top:684px" width="15" height="17" viewBox="0 0 15 17"><path d="M0.8 9.3 L9 1.2 L14.2 6.4 L6.1 14.2 Z" fill="#fff" stroke="#6a9440" stroke-width="0.9" stroke-linejoin="round"/><path d="M7.3 3.8 L11.9 8.4" stroke="#3f9070" stroke-width="2" stroke-dasharray="1.1 0.5"/><path d="M2.8 8.8 C3.8 7.4 6.2 7.6 7.4 9 L8.6 10.2 L7.2 12.2 C5.4 12.2 3.2 11 2.8 8.8 Z" fill="#058a05"/><path d="M9 6.8 C11 6.2 13.8 7 14.2 9 C14.4 10.6 12.8 12.4 10.6 13 L8.4 13.2 L6.8 12.6 L9.6 10.4 C10.4 9.4 10 8 9 6.8 Z" fill="#058a05"/><rect x="4.8" y="13.6" width="6.8" height="2.4" rx="1.1" fill="#058a05"/></svg>
<div class="t" style="left:408.5px;top:678.84px;font-size:12px;font-weight:400;color:#55555f;letter-spacing:-0.1px">client33@sandboxonefitstop.com</div>
<div class="t" style="left:603.5px;top:678.84px;font-size:12px;font-weight:400;color:#55555f;letter-spacing:-0.15px"><span style="margin:0 -1.1px">1</span>23789</div>
<div class="t" style="left:753.5px;top:678.84px;font-size:12px;font-weight:400;color:#55555f;">Male</div>
<svg style="position:absolute;left:903px;top:676.0px" width="14" height="14" viewBox="0 0 14 14"><circle cx="7" cy="7" r="7" fill="#7f9fd5"/><path d="M3.5 7 L6 9.5 L10.8 4.7" fill="none" stroke="#fff" stroke-width="2"/></svg>
<div class="t" style="left:920px;top:678.84px;font-size:12px;font-weight:400;color:#55555f;letter-spacing:-0.15px">4<span style="margin:0 -1.1px">1</span>2643<span style="margin:0 -1.1px">1</span>27</div>
<svg style="position:absolute;left:1293px;top:675.5px" width="17" height="14" viewBox="0 0 17 14"><rect x="0.6" y="0.6" width="15.8" height="12.4" rx="1.5" fill="#fff" stroke="#5f5f5f" stroke-width="1.2"/><rect x="0.6" y="0.6" width="15.8" height="3" fill="#5f5f5f"/><rect x="3.5" y="5.5" width="11" height="1" fill="#5f5f5f"/><rect x="3.5" y="8" width="11" height="1.2" fill="#999"/><rect x="3.5" y="10.5" width="11" height="1" fill="#5f5f5f"/><rect x="2" y="5.5" width="1" height="1" fill="#5f5f5f"/><rect x="2" y="8" width="1" height="1" fill="#5f5f5f"/><rect x="2" y="10.5" width="1" height="1" fill="#5f5f5f"/></svg>
<svg style="position:absolute;left:1319px;top:674.5px" width="14" height="16" viewBox="0 0 14 16"><path d="M0 0 L9 0 L9 5 L14 5 L14 16 L0 16 Z" fill="#5f5f5f"/><path d="M10 0 L14 4 L10 4 Z" fill="#5f5f5f"/></svg>
<svg style="position:absolute;left:1343px;top:675.5px" width="14" height="14" viewBox="0 0 14 14"><circle cx="7" cy="7" r="7" fill="#5f5f5f"/><rect x="6" y="2.8" width="2.2" height="2" fill="#fff"/><path d="M4.8 6 L8.3 6 L8.3 10 L9.3 10 L9.3 11.5 L4.8 11.5 L4.8 10 L5.9 10 L5.9 7.4 L4.8 7.4 Z" fill="#fff"/></svg>
<svg style="position:absolute;left:1367px;top:674.5px" width="15" height="16" viewBox="0 0 15 16"><rect x="0.5" y="2.5" width="14" height="13" fill="#fff" stroke="#5f5f5f" stroke-width="1"/><rect x="0.5" y="2.5" width="14" height="2.5" fill="#5f5f5f"/><rect x="4" y="5" width="0.9" height="10.5" fill="#5f5f5f"/><rect x="7.5" y="5" width="0.9" height="10.5" fill="#5f5f5f"/><rect x="11" y="5" width="0.9" height="10.5" fill="#5f5f5f"/><rect x="0.5" y="8" width="14" height="0.9" fill="#5f5f5f"/><rect x="0.5" y="11.5" width="14" height="0.9" fill="#5f5f5f"/><path d="M3 3.5 L3 1.6 C3 0.2 5.6 0.2 5.6 1.6 L5.6 3.5" fill="none" stroke="#5f5f5f" stroke-width="1.1"/><path d="M9.4 3.5 L9.4 1.6 C9.4 0.2 12 0.2 12 1.6 L12 3.5" fill="none" stroke="#5f5f5f" stroke-width="1.1"/></svg>
<svg style="position:absolute;left:1392px;top:675.5px" width="21" height="14" viewBox="0 0 21 14"><rect x="0" y="0" width="21" height="3.2" rx="1" fill="#5f5f5f"/><rect x="0" y="5.3" width="21" height="8.7" rx="1" fill="#5f5f5f"/><rect x="2.5" y="10.5" width="2.5" height="1" fill="#fff"/><rect x="5.5" y="10.5" width="3" height="1" fill="#fff"/></svg>
<svg style="position:absolute;left:1422px;top:675.5px" width="14" height="14" viewBox="0 0 14 14"><path d="M13.5 0.5 L9.5 4.5" stroke="#5f5f5f" stroke-width="1.8"/><path d="M7.6 2 L7.6 6.4 L12 6.4 Z" fill="#5f5f5f"/><path d="M0.5 13.5 L4.5 9.5" stroke="#5f5f5f" stroke-width="1.8"/><path d="M2 7.6 L6.4 7.6 L6.4 12 Z" fill="#5f5f5f"/></svg>
<svg style="position:absolute;left:1446px;top:675.5px" width="11" height="13" viewBox="0 0 11 13"><path d="M2.5 6 L2.5 4 C2.5 1.5 4 0.8 5.5 0.8 C7 0.8 8.5 1.5 8.5 4 L8.5 6" fill="none" stroke="#5f5f5f" stroke-width="1.8"/><rect x="0.5" y="5.8" width="10" height="7" rx="0.8" fill="#5f5f5f"/></svg>
<svg style="position:absolute;left:1469px;top:675.5px" width="14" height="14" viewBox="0 0 14 14"><circle cx="7" cy="7" r="5.0" fill="#5f5f5f"/><rect x="5.5" y="-0.09999999999999964" width="3.0" height="3.0999999999999996" rx="0.6" fill="#5f5f5f" transform="rotate(22.5 7 7)"/><rect x="5.5" y="-0.09999999999999964" width="3.0" height="3.0999999999999996" rx="0.6" fill="#5f5f5f" transform="rotate(67.5 7 7)"/><rect x="5.5" y="-0.09999999999999964" width="3.0" height="3.0999999999999996" rx="0.6" fill="#5f5f5f" transform="rotate(112.5 7 7)"/><rect x="5.5" y="-0.09999999999999964" width="3.0" height="3.0999999999999996" rx="0.6" fill="#5f5f5f" transform="rotate(157.5 7 7)"/><rect x="5.5" y="-0.09999999999999964" width="3.0" height="3.0999999999999996" rx="0.6" fill="#5f5f5f" transform="rotate(202.5 7 7)"/><rect x="5.5" y="-0.09999999999999964" width="3.0" height="3.0999999999999996" rx="0.6" fill="#5f5f5f" transform="rotate(247.5 7 7)"/><rect x="5.5" y="-0.09999999999999964" width="3.0" height="3.0999999999999996" rx="0.6" fill="#5f5f5f" transform="rotate(292.5 7 7)"/><rect x="5.5" y="-0.09999999999999964" width="3.0" height="3.0999999999999996" rx="0.6" fill="#5f5f5f" transform="rotate(337.5 7 7)"/><circle cx="7" cy="7" r="2.1" fill="#fff"/></svg>
<div style="position:absolute;left:17px;top:713px;width:1501px;height:56px;background:#f9f9f9"></div>
<div style="position:absolute;left:17px;top:769px;width:1501px;height:1px;background:#ebebf2"></div>
<div style="position:absolute;left:27px;top:733px;width:14px;height:14px;background:#fff;border:2px solid #a0a0a0;border-radius:4px"></div>
<div class="t" style="left:120px;top:723.84px;font-size:12px;font-weight:400;color:#55555f;letter-spacing:-0.08px">Alyx Mason</div>
<svg style="position:absolute;left:120px;top:741px" width="15" height="17" viewBox="0 0 15 17"><path d="M0.8 9.3 L9 1.2 L14.2 6.4 L6.1 14.2 Z" fill="#fff" stroke="#6a9440" stroke-width="0.9" stroke-linejoin="round"/><path d="M7.3 3.8 L11.9 8.4" stroke="#3f9070" stroke-width="2" stroke-dasharray="1.1 0.5"/><path d="M2.8 8.8 C3.8 7.4 6.2 7.6 7.4 9 L8.6 10.2 L7.2 12.2 C5.4 12.2 3.2 11 2.8 8.8 Z" fill="#058a05"/><path d="M9 6.8 C11 6.2 13.8 7 14.2 9 C14.4 10.6 12.8 12.4 10.6 13 L8.4 13.2 L6.8 12.6 L9.6 10.4 C10.4 9.4 10 8 9 6.8 Z" fill="#058a05"/><rect x="4.8" y="13.6" width="6.8" height="2.4" rx="1.1" fill="#058a05"/></svg>
<div class="t" style="left:408.5px;top:735.84px;font-size:12px;font-weight:400;color:#55555f;letter-spacing:-0.1px">rick.jones+am<span style="margin:0 -1.1px">1</span>@hapana.com</div>
<div class="t" style="left:603.5px;top:735.84px;font-size:12px;font-weight:400;color:#55555f;letter-spacing:-0.15px">2447584</div>
<svg style="position:absolute;left:903px;top:733.0px" width="14" height="14" viewBox="0 0 14 14"><circle cx="7" cy="7" r="7" fill="#f00000"/><path d="M4.3 4.3 L9.7 9.7 M9.7 4.3 L4.3 9.7" stroke="#fff" stroke-width="2.2"/></svg>
<div class="t" style="left:920px;top:735.84px;font-size:12px;font-weight:400;color:#55555f;letter-spacing:-0.15px">5<span style="margin:0 -1.1px">1</span>32223232</div>
<svg style="position:absolute;left:1293px;top:732.5px" width="17" height="14" viewBox="0 0 17 14"><rect x="0.6" y="0.6" width="15.8" height="12.4" rx="1.5" fill="#fff" stroke="#5f5f5f" stroke-width="1.2"/><rect x="0.6" y="0.6" width="15.8" height="3" fill="#5f5f5f"/><rect x="3.5" y="5.5" width="11" height="1" fill="#5f5f5f"/><rect x="3.5" y="8" width="11" height="1.2" fill="#999"/><rect x="3.5" y="10.5" width="11" height="1" fill="#5f5f5f"/><rect x="2" y="5.5" width="1" height="1" fill="#5f5f5f"/><rect x="2" y="8" width="1" height="1" fill="#5f5f5f"/><rect x="2" y="10.5" width="1" height="1" fill="#5f5f5f"/></svg>
<svg style="position:absolute;left:1319px;top:731.5px" width="14" height="16" viewBox="0 0 14 16"><path d="M0 0 L9 0 L9 5 L14 5 L14 16 L0 16 Z" fill="#5f5f5f"/><path d="M10 0 L14 4 L10 4 Z" fill="#5f5f5f"/></svg>
<svg style="position:absolute;left:1343px;top:732.5px" width="14" height="14" viewBox="0 0 14 14"><circle cx="7" cy="7" r="7" fill="#5f5f5f"/><rect x="6" y="2.8" width="2.2" height="2" fill="#fff"/><path d="M4.8 6 L8.3 6 L8.3 10 L9.3 10 L9.3 11.5 L4.8 11.5 L4.8 10 L5.9 10 L5.9 7.4 L4.8 7.4 Z" fill="#fff"/></svg>
<svg style="position:absolute;left:1367px;top:731.5px" width="15" height="16" viewBox="0 0 15 16"><rect x="0.5" y="2.5" width="14" height="13" fill="#fff" stroke="#5f5f5f" stroke-width="1"/><rect x="0.5" y="2.5" width="14" height="2.5" fill="#5f5f5f"/><rect x="4" y="5" width="0.9" height="10.5" fill="#5f5f5f"/><rect x="7.5" y="5" width="0.9" height="10.5" fill="#5f5f5f"/><rect x="11" y="5" width="0.9" height="10.5" fill="#5f5f5f"/><rect x="0.5" y="8" width="14" height="0.9" fill="#5f5f5f"/><rect x="0.5" y="11.5" width="14" height="0.9" fill="#5f5f5f"/><path d="M3 3.5 L3 1.6 C3 0.2 5.6 0.2 5.6 1.6 L5.6 3.5" fill="none" stroke="#5f5f5f" stroke-width="1.1"/><path d="M9.4 3.5 L9.4 1.6 C9.4 0.2 12 0.2 12 1.6 L12 3.5" fill="none" stroke="#5f5f5f" stroke-width="1.1"/></svg>
<svg style="position:absolute;left:1392px;top:732.5px" width="21" height="14" viewBox="0 0 21 14"><rect x="0" y="0" width="21" height="3.2" rx="1" fill="#5f5f5f"/><rect x="0" y="5.3" width="21" height="8.7" rx="1" fill="#5f5f5f"/><rect x="2.5" y="10.5" width="2.5" height="1" fill="#fff"/><rect x="5.5" y="10.5" width="3" height="1" fill="#fff"/></svg>
<svg style="position:absolute;left:1422px;top:732.5px" width="14" height="14" viewBox="0 0 14 14"><path d="M13.5 0.5 L9.5 4.5" stroke="#5f5f5f" stroke-width="1.8"/><path d="M7.6 2 L7.6 6.4 L12 6.4 Z" fill="#5f5f5f"/><path d="M0.5 13.5 L4.5 9.5" stroke="#5f5f5f" stroke-width="1.8"/><path d="M2 7.6 L6.4 7.6 L6.4 12 Z" fill="#5f5f5f"/></svg>
<svg style="position:absolute;left:1446px;top:732.5px" width="11" height="13" viewBox="0 0 11 13"><path d="M2.5 6 L2.5 4 C2.5 1.5 4 0.8 5.5 0.8 C7 0.8 8.5 1.5 8.5 4 L8.5 6" fill="none" stroke="#5f5f5f" stroke-width="1.8"/><rect x="0.5" y="5.8" width="10" height="7" rx="0.8" fill="#5f5f5f"/></svg>
<svg style="position:absolute;left:1469px;top:732.5px" width="14" height="14" viewBox="0 0 14 14"><circle cx="7" cy="7" r="5.0" fill="#5f5f5f"/><rect x="5.5" y="-0.09999999999999964" width="3.0" height="3.0999999999999996" rx="0.6" fill="#5f5f5f" transform="rotate(22.5 7 7)"/><rect x="5.5" y="-0.09999999999999964" width="3.0" height="3.0999999999999996" rx="0.6" fill="#5f5f5f" transform="rotate(67.5 7 7)"/><rect x="5.5" y="-0.09999999999999964" width="3.0" height="3.0999999999999996" rx="0.6" fill="#5f5f5f" transform="rotate(112.5 7 7)"/><rect x="5.5" y="-0.09999999999999964" width="3.0" height="3.0999999999999996" rx="0.6" fill="#5f5f5f" transform="rotate(157.5 7 7)"/><rect x="5.5" y="-0.09999999999999964" width="3.0" height="3.0999999999999996" rx="0.6" fill="#5f5f5f" transform="rotate(202.5 7 7)"/><rect x="5.5" y="-0.09999999999999964" width="3.0" height="3.0999999999999996" rx="0.6" fill="#5f5f5f" transform="rotate(247.5 7 7)"/><rect x="5.5" y="-0.09999999999999964" width="3.0" height="3.0999999999999996" rx="0.6" fill="#5f5f5f" transform="rotate(292.5 7 7)"/><rect x="5.5" y="-0.09999999999999964" width="3.0" height="3.0999999999999996" rx="0.6" fill="#5f5f5f" transform="rotate(337.5 7 7)"/><circle cx="7" cy="7" r="2.1" fill="#fff"/></svg>
<div style="position:absolute;left:105px;top:273px;width:291px;height:59px;border:3px solid #d8262c;border-radius:9px"></div>
<div style="position:absolute;left:700px;top:788px;width:134px;height:25px;border:1px solid #dcdcdc;border-radius:4px;background:#fff;overflow:hidden"></div>
<div style="position:absolute;left:701px;top:789px;width:28px;height:25px;background:#ececec;border-radius:3px 0 0 3px"></div>
<div style="position:absolute;left:729px;top:789px;width:1px;height:25px;background:#dcdcdc"></div>
<div style="position:absolute;left:755px;top:789px;width:1px;height:25px;background:#dcdcdc"></div>
<div style="position:absolute;left:781px;top:789px;width:1px;height:25px;background:#dcdcdc"></div>
<div style="position:absolute;left:808px;top:789px;width:1px;height:25px;background:#dcdcdc"></div>
<div class="t" style="left:695.5px;width:40px;text-align:center;top:795.00px;font-size:13px;color:#1b1a33">1</div>
<div class="t" style="left:722.5px;width:40px;text-align:center;top:795.00px;font-size:13px;color:#1b1a33">2</div>
<div class="t" style="left:749px;width:40px;text-align:center;top:795.00px;font-size:13px;color:#1b1a33">3</div>
<div class="t" style="left:775.5px;width:40px;text-align:center;top:795.69px;font-size:11px;color:#1b1a33">&gt;</div>
<div class="t" style="left:801.5px;width:40px;text-align:center;top:796.19px;font-size:11px;color:#1b1a33">&raquo;</div>
<div style="position:absolute;left:1535px;top:0px;width:6px;height:840px;background:#a8a8a8"></div>
<div style="position:absolute;left:1213px;top:839px;width:64px;height:48px;background:#fff;border-radius:24px;box-shadow:0 1px 5px rgba(0,0,0,0.10)"></div>
<svg style="position:absolute;left:1231px;top:852px" width="28" height="22" viewBox="0 0 28 22"><path d="M1 5.5 L1 2.5 Q1 1 2.5 1 L5.5 1 M22.5 1 L25.5 1 Q27 1 27 2.5 L27 5.5 M27 16 L27 19 Q27 20.5 25.5 20.5 L22.5 20.5 M5.5 20.5 L2.5 20.5 Q1 20.5 1 19 L1 16" fill="none" stroke="#f05a3c" stroke-width="1.7" stroke-linecap="round"/><rect x="4" y="3.6" width="2" height="14.4" fill="#f05a3c"/><rect x="8" y="3.8" width="1.5" height="1.8" fill="#f05a3c"/><rect x="8" y="6.6" width="1.5" height="11.399999999999999" fill="#f05a3c"/><rect x="12" y="3.8" width="1.5" height="1.8" fill="#f05a3c"/><rect x="12" y="6.6" width="1.5" height="11.399999999999999" fill="#f05a3c"/><rect x="15" y="3.8" width="1.5" height="14.2" fill="#f05a3c"/><rect x="18.5" y="3.8" width="1.5" height="1.8" fill="#f05a3c"/><rect x="18.5" y="6.6" width="1.5" height="11.399999999999999" fill="#f05a3c"/><rect x="22.2" y="3.6" width="1.8" height="14.4" fill="#f05a3c"/></svg>
</body></html>
